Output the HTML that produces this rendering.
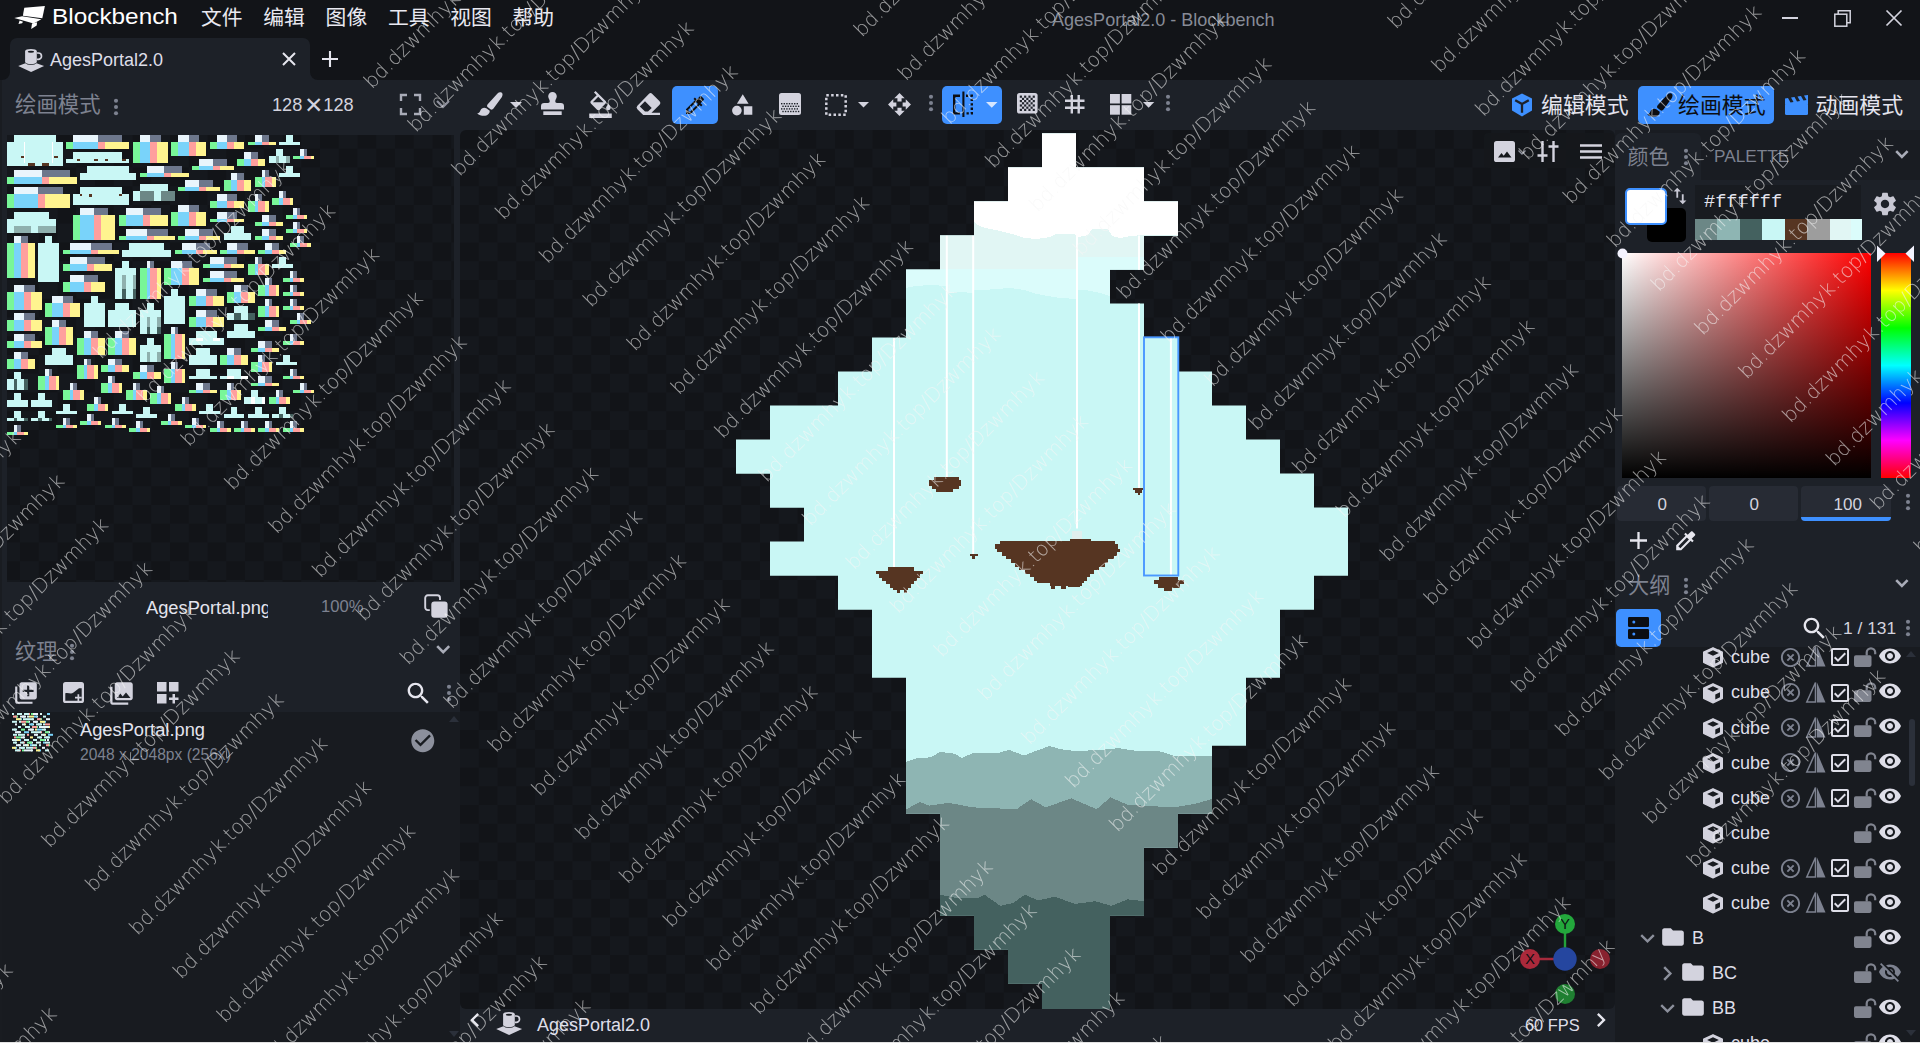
<!DOCTYPE html><html lang="zh"><head><meta charset="utf-8"><title>AgesPortal2.0 - Blockbench</title><style>
*{box-sizing:border-box;margin:0;padding:0}
html,body{width:1920px;height:1043px;overflow:hidden;background:#1d2128;}
body{position:relative;font-family:"Liberation Sans", "Noto Sans CJK SC", sans-serif;color:#d3d3de;font-size:18px;line-height:1}
.a{position:absolute}
.t{position:absolute;white-space:nowrap;line-height:1}
.cj{font-family:"Liberation Sans", "Noto Sans CJK SC", sans-serif}
svg{position:absolute;overflow:visible}
.wm{position:absolute;left:0;top:0;width:1920px;height:1043px;overflow:hidden;pointer-events:none}
.wm span{position:absolute;white-space:nowrap;font-family:"DejaVu Sans","Liberation Sans",sans-serif;font-weight:200;font-size:20px;line-height:24px;height:24px;color:rgba(222,222,222,.5);transform-origin:0 100%;transform:rotate(-30deg);letter-spacing:.42px}
</style></head><body><div class="a" style="left:0px;top:0px;width:1920px;height:38px;background:#121418;"></div>
<div class="a" style="left:0px;top:38px;width:1920px;height:42px;background:#121418;"></div>
<div class="a" style="left:10px;top:38px;width:300px;height:42px;background:#1d2128;border-radius:7px 7px 0 0"></div>
<svg style="left:2px;top:72px" width="8" height="8"><path d="M8 0V8H0A8 8 0 0 0 8 0Z" fill="#1d2128"/></svg>
<svg style="left:310px;top:72px" width="8" height="8"><path d="M0 0V8H8A8 8 0 0 1 0 0Z" fill="#1d2128"/></svg>
<div class="a" style="left:0px;top:80px;width:1920px;height:50px;background:#1d2128;"></div>
<div class="a" style="left:0px;top:80px;width:2px;height:963px;background:#191c21;"></div>
<div class="a" id="vp" style="left:460px;top:130px;width:1155px;height:879px;border-radius:6px;overflow:hidden;background-color:#15181d;background-image:conic-gradient(#121418 25%,#15181d 0 50%,#121418 0 75%,#15181d 0);background-size:37.5px 37.5px;background-position:18.75px 0;">
<svg style="left:0;top:0" width="1155" height="879" viewBox="0 0 1155 879"><defs><clipPath id="mc"><rect x="582.0" y="3.5" width="34.0" height="34.3"/><rect x="548.0" y="37.5" width="136.0" height="34.3"/><rect x="514.0" y="71.5" width="204.0" height="34.3"/><rect x="480.0" y="105.5" width="204.0" height="34.3"/><rect x="446.0" y="139.5" width="204.0" height="34.3"/><rect x="446.0" y="173.5" width="238.0" height="34.3"/><rect x="412.0" y="207.5" width="306.0" height="34.3"/><rect x="378.0" y="241.5" width="374.0" height="34.3"/><rect x="310.0" y="275.5" width="476.0" height="34.3"/><rect x="276.0" y="309.5" width="544.0" height="34.3"/><rect x="310.0" y="343.5" width="544.0" height="34.3"/><rect x="344.0" y="377.5" width="544.0" height="34.3"/><rect x="310.0" y="411.5" width="578.0" height="34.3"/><rect x="378.0" y="445.5" width="476.0" height="34.3"/><rect x="412.0" y="479.5" width="408.0" height="34.3"/><rect x="412.0" y="513.5" width="408.0" height="34.3"/><rect x="446.0" y="547.5" width="340.0" height="34.3"/><rect x="446.0" y="581.5" width="340.0" height="34.3"/><rect x="446.0" y="615.5" width="306.0" height="34.3"/><rect x="446.0" y="649.5" width="306.0" height="34.3"/><rect x="480.0" y="683.5" width="238.0" height="34.3"/><rect x="480.0" y="717.5" width="204.0" height="34.3"/><rect x="480.0" y="751.5" width="204.0" height="34.3"/><rect x="514.0" y="785.5" width="136.0" height="34.3"/><rect x="548.0" y="819.5" width="102.0" height="34.3"/><rect x="582.0" y="853.5" width="68.0" height="34.3"/></clipPath></defs><g clip-path="url(#mc)" shape-rendering="crispEdges"><rect x="0" y="0" width="1155" height="879" fill="#c9f7f5"/><polygon points="440.0,0.0 740.0,0.0 740.0,166.0 650.0,166.0 640.0,163.0 625.0,160.0 617.0,160.0 617.0,169.0 600.0,168.0 588.0,166.0 577.0,164.0 564.0,160.0 550.0,158.0 535.0,159.0 525.0,160.0 513.0,160.0 513.0,163.0 500.0,162.0 487.0,163.0 487.0,156.0 470.0,155.0 455.0,156.0 446.0,158.0 440.0,158.0" fill="#dbfcfb"/><polygon points="440.0,0.0 740.0,0.0 740.0,127.0 617.0,127.0 617.0,139.0 440.0,139.0" fill="#e1f6f4"/><polygon points="440.0,0.0 740.0,0.0 740.0,105.0 684.0,105.0 670.0,106.0 660.0,108.0 652.0,106.0 648.0,99.0 632.0,99.0 628.0,105.0 618.0,107.0 614.0,104.0 596.0,104.0 590.0,107.0 577.0,109.0 565.0,108.0 552.0,104.0 540.0,101.0 525.0,98.0 518.0,95.0 514.0,92.0 514.0,105.0 440.0,105.0" fill="#ffffff"/><polygon points="446.4,631.9 456.4,628.2 471.0,627.3 480.0,621.9 494.6,623.7 502.0,628.2 513.0,622.8 525.6,622.8 538.4,622.8 549.3,620.0 563.9,625.5 578.4,620.0 589.4,616.0 600.3,619.1 614.9,621.0 640.4,620.0 658.6,618.2 676.8,621.0 698.7,621.0 713.2,625.5 751.5,626.4 790.0,626.0 790.0,890.0 420.0,890.0 420.0,632.0" fill="#8eb5b3"/><polygon points="446.4,679.2 460.0,672.0 469.0,675.6 489.0,672.9 512.9,677.4 556.6,679.2 571.1,669.2 585.7,677.4 611.2,668.3 636.7,679.2 650.4,667.4 667.7,674.7 713.2,677.4 735.0,673.8 751.5,669.2 790.0,669.0 790.0,890.0 420.0,890.0 420.0,679.0" fill="#6c8786"/><polygon points="470.0,764.0 480.0,764.8 494.6,767.6 516.5,768.5 524.7,764.8 540.2,775.8 552.9,773.0 564.8,764.8 578.4,770.3 594.8,766.7 614.9,774.0 634.9,771.2 651.3,775.8 667.7,769.4 684.0,771.2 740.0,771.0 740.0,890.0 470.0,890.0" fill="#44615f"/></g><g clip-path="url(#mc)"><rect x="433.0" y="208.0" width="2" height="230.0" fill="#ffffff"/><rect x="485.8" y="105.5" width="2" height="241.5" fill="#ffffff"/><rect x="512.2" y="105.5" width="2" height="318.5" fill="#ffffff"/><rect x="616.0" y="105.5" width="2" height="293.0" fill="#ffffff"/><rect x="678.0" y="105.5" width="2" height="253.0" fill="#ffffff"/><rect x="709.9" y="208.0" width="2" height="237.5" fill="#ffffff"/></g><rect x="473.5" y="346.8" width="25.5" height="3.7" fill="#563522" shape-rendering="crispEdges"/><rect x="469.0" y="350.3" width="32.0" height="5.6" fill="#563522" shape-rendering="crispEdges"/><rect x="472.0" y="355.7" width="27.0" height="3.0" fill="#563522" shape-rendering="crispEdges"/><rect x="475.5" y="358.5" width="17.5" height="3.6" fill="#563522" shape-rendering="crispEdges"/><rect x="509.8" y="423.9" width="8.0" height="2.3" fill="#563522" shape-rendering="crispEdges"/><rect x="512.4" y="426.0" width="2.8" height="3.0" fill="#563522" shape-rendering="crispEdges"/><rect x="672.7" y="358.0" width="10.6" height="2.3" fill="#563522" shape-rendering="crispEdges"/><rect x="675.4" y="360.1" width="6.2" height="2.9" fill="#563522" shape-rendering="crispEdges"/><rect x="677.7" y="362.8" width="2.5" height="2.3" fill="#563522" shape-rendering="crispEdges"/><rect x="609.8" y="408.8" width="21.3" height="2.5" fill="#563522" shape-rendering="crispEdges"/><rect x="539.9" y="411.1" width="115.1" height="3.3" fill="#563522" shape-rendering="crispEdges"/><rect x="534.9" y="414.2" width="122.6" height="4.6" fill="#563522" shape-rendering="crispEdges"/><rect x="537.0" y="418.6" width="123.0" height="3.8" fill="#563522" shape-rendering="crispEdges"/><rect x="541.5" y="422.2" width="115.5" height="3.7" fill="#563522" shape-rendering="crispEdges"/><rect x="546.0" y="425.7" width="107.5" height="3.7" fill="#563522" shape-rendering="crispEdges"/><rect x="550.5" y="429.2" width="97.5" height="3.8" fill="#563522" shape-rendering="crispEdges"/><rect x="555.0" y="432.8" width="89.5" height="3.7" fill="#563522" shape-rendering="crispEdges"/><rect x="559.4" y="436.3" width="79.6" height="3.7" fill="#563522" shape-rendering="crispEdges"/><rect x="565.0" y="439.8" width="69.0" height="3.7" fill="#563522" shape-rendering="crispEdges"/><rect x="570.0" y="443.3" width="60.2" height="3.8" fill="#563522" shape-rendering="crispEdges"/><rect x="574.0" y="446.9" width="53.0" height="3.7" fill="#563522" shape-rendering="crispEdges"/><rect x="577.0" y="450.4" width="47.0" height="2.8" fill="#563522" shape-rendering="crispEdges"/><rect x="590.4" y="453.0" width="31.8" height="3.0" fill="#563522" shape-rendering="crispEdges"/><rect x="591.3" y="455.8" width="3.7" height="3.0" fill="#563522" shape-rendering="crispEdges"/><rect x="601.0" y="455.8" width="4.5" height="3.0" fill="#563522" shape-rendering="crispEdges"/><rect x="608.0" y="455.8" width="12.0" height="1.6" fill="#563522" shape-rendering="crispEdges"/><rect x="612" y="401" width="10" height="8" fill="#e6ecec" opacity=".8"/><rect x="428.3" y="437.1" width="25.7" height="3.8" fill="#563522" shape-rendering="crispEdges"/><rect x="415.9" y="440.7" width="47.0" height="3.7" fill="#563522" shape-rendering="crispEdges"/><rect x="419.0" y="444.2" width="40.5" height="3.5" fill="#563522" shape-rendering="crispEdges"/><rect x="422.0" y="447.5" width="35.0" height="3.1" fill="#563522" shape-rendering="crispEdges"/><rect x="425.5" y="450.4" width="28.5" height="3.8" fill="#563522" shape-rendering="crispEdges"/><rect x="429.5" y="454.0" width="21.0" height="3.7" fill="#563522" shape-rendering="crispEdges"/><rect x="433.0" y="457.5" width="14.5" height="2.9" fill="#563522" shape-rendering="crispEdges"/><rect x="437.0" y="460.2" width="3.0" height="2.5" fill="#563522" shape-rendering="crispEdges"/><rect x="444.0" y="460.2" width="2.5" height="2.5" fill="#563522" shape-rendering="crispEdges"/><rect x="699.3" y="446.5" width="18.6" height="3.2" fill="#563522" shape-rendering="crispEdges"/><rect x="694.0" y="449.5" width="30.0" height="4.7" fill="#563522" shape-rendering="crispEdges"/><rect x="697.5" y="454.0" width="22.5" height="3.5" fill="#563522" shape-rendering="crispEdges"/><rect x="703.7" y="457.3" width="8.0" height="3.6" fill="#563522" shape-rendering="crispEdges"/><rect x="684" y="207.3" width="34.3" height="238.2" fill="none" stroke="#4a98ff" stroke-width="1.9"/></svg>
</div>
<div class="a" style="left:460px;top:1009px;width:1155px;height:33px;background:#1d2128;"></div>
<div class="a" style="left:0px;top:1041.5px;width:1920px;height:2px;background:#e4e4e4;"></div>
<div class="a" style="left:7px;top:135px;width:447px;height:447px;overflow:hidden;background-color:#15181d;background-image:conic-gradient(#121418 25%,#15181d 0 50%,#121418 0 75%,#15181d 0);background-size:37.5px 37.5px;background-position:13px 13.7px;"><svg style="left:0;top:0" width="447" height="447" viewBox="0 0 128 128" shape-rendering="crispEdges"><rect x="2" y="0" width="12" height="2" fill="#c9f7f5"/><rect x="0" y="2" width="16" height="7" fill="#c9f7f5"/><rect x="19" y="0" width="7" height="2" fill="#e9f5fc"/><rect x="26" y="0" width="7" height="2" fill="#6d778c"/><rect x="17" y="2" width="2" height="2" fill="#78f698"/><rect x="19" y="2" width="7" height="2" fill="#79d3fa"/><rect x="26" y="2" width="2" height="2" fill="#ff9f9d"/><rect x="28" y="2" width="7" height="2" fill="#fff48f"/><rect x="38" y="0" width="3" height="2" fill="#e9f5fc"/><rect x="41" y="0" width="3" height="2" fill="#6d778c"/><rect x="36" y="2" width="2" height="6" fill="#78f698"/><rect x="38" y="2" width="3" height="6" fill="#79d3fa"/><rect x="41" y="2" width="2" height="6" fill="#ff9f9d"/><rect x="43" y="2" width="3" height="6" fill="#fff48f"/><rect x="19" y="5" width="14" height="2" fill="#c9f7f5"/><rect x="17" y="7" width="18" height="1" fill="#c9f7f5"/><rect x="2" y="10" width="8" height="2" fill="#e9f5fc"/><rect x="10" y="10" width="8" height="2" fill="#6d778c"/><rect x="0" y="12" width="2" height="2" fill="#78f698"/><rect x="2" y="12" width="8" height="2" fill="#79d3fa"/><rect x="10" y="12" width="2" height="2" fill="#ff9f9d"/><rect x="12" y="12" width="8" height="2" fill="#fff48f"/><rect x="23" y="9" width="12" height="2" fill="#c9f7f5"/><rect x="21" y="11" width="16" height="2" fill="#c9f7f5"/><rect x="40" y="9" width="5" height="2" fill="#e9f5fc"/><rect x="45" y="9" width="5" height="2" fill="#6d778c"/><rect x="38" y="11" width="2" height="1" fill="#78f698"/><rect x="40" y="11" width="5" height="1" fill="#79d3fa"/><rect x="45" y="11" width="2" height="1" fill="#ff9f9d"/><rect x="47" y="11" width="5" height="1" fill="#fff48f"/><rect x="2" y="15" width="7" height="2" fill="#e9f5fc"/><rect x="9" y="15" width="7" height="2" fill="#6d778c"/><rect x="0" y="17" width="2" height="4" fill="#78f698"/><rect x="2" y="17" width="7" height="4" fill="#79d3fa"/><rect x="9" y="17" width="2" height="4" fill="#ff9f9d"/><rect x="11" y="17" width="7" height="4" fill="#fff48f"/><rect x="21" y="15" width="12" height="2" fill="#c9f7f5"/><rect x="19" y="17" width="16" height="3" fill="#c9f7f5"/><rect x="38" y="14" width="8" height="2" fill="#c9f7f5"/><rect x="36" y="16" width="12" height="3" fill="#c9f7f5"/><rect x="38" y="16" width="4" height="3" fill="#6c8786"/><rect x="44" y="16" width="4" height="3" fill="#6c8786"/><rect x="2" y="22" width="10" height="2" fill="#c9f7f5"/><rect x="0" y="24" width="14" height="4" fill="#c9f7f5"/><rect x="2" y="26" width="5" height="2" fill="#8fb0ae"/><rect x="9" y="26" width="5" height="2" fill="#8fb0ae"/><rect x="21" y="21" width="4" height="2" fill="#e9f5fc"/><rect x="25" y="21" width="4" height="2" fill="#6d778c"/><rect x="19" y="23" width="2" height="7" fill="#78f698"/><rect x="21" y="23" width="4" height="7" fill="#79d3fa"/><rect x="25" y="23" width="2" height="7" fill="#ff9f9d"/><rect x="27" y="23" width="4" height="7" fill="#fff48f"/><rect x="34" y="21" width="5" height="2" fill="#e9f5fc"/><rect x="39" y="21" width="5" height="2" fill="#6d778c"/><rect x="32" y="23" width="2" height="3" fill="#78f698"/><rect x="34" y="23" width="5" height="3" fill="#79d3fa"/><rect x="39" y="23" width="2" height="3" fill="#ff9f9d"/><rect x="41" y="23" width="5" height="3" fill="#fff48f"/><rect x="34" y="27" width="6" height="2" fill="#e9f5fc"/><rect x="40" y="27" width="6" height="2" fill="#6d778c"/><rect x="32" y="29" width="2" height="1" fill="#78f698"/><rect x="34" y="29" width="6" height="1" fill="#79d3fa"/><rect x="40" y="29" width="2" height="1" fill="#ff9f9d"/><rect x="42" y="29" width="6" height="1" fill="#fff48f"/><rect x="4" y="6" width="1" height="0.5" fill="#563522"/><rect x="13.5" y="6" width="1" height="0.5" fill="#563522"/><rect x="6" y="8" width="2" height="1" fill="#563522"/><rect x="10" y="8" width="2" height="1" fill="#563522"/><rect x="20" y="7" width="1" height="0.5" fill="#563522"/><rect x="25" y="7" width="1" height="0.5" fill="#563522"/><rect x="28" y="7" width="1" height="0.5" fill="#563522"/><rect x="33" y="7" width="1" height="0.5" fill="#563522"/><rect x="21" y="17" width="0.5" height="0.5" fill="#563522"/><rect x="23.5" y="17" width="0.7" height="0.7" fill="#563522"/><rect x="32" y="17" width="0.8" height="0.6" fill="#563522"/><rect x="11" y="41" width="1" height="1" fill="#563522"/><rect x="14.3" y="41" width="0.7" height="1" fill="#563522"/><rect x="5" y="2" width="0.25" height="6" fill="#ffffff"/><rect x="13" y="2" width="0.25" height="6" fill="#ffffff"/><rect x="11" y="31" width="0.3" height="10" fill="#ffffff"/><rect x="49" y="0" width="3" height="2" fill="#e9f5fc"/><rect x="52" y="0" width="3" height="2" fill="#6d778c"/><rect x="47" y="2" width="2" height="4" fill="#78f698"/><rect x="49" y="2" width="3" height="4" fill="#79d3fa"/><rect x="52" y="2" width="2" height="4" fill="#ff9f9d"/><rect x="54" y="2" width="3" height="4" fill="#fff48f"/><rect x="60" y="0" width="3" height="2" fill="#e9f5fc"/><rect x="63" y="0" width="3" height="2" fill="#6d778c"/><rect x="58" y="2" width="2" height="2" fill="#78f698"/><rect x="60" y="2" width="3" height="2" fill="#79d3fa"/><rect x="63" y="2" width="2" height="2" fill="#ff9f9d"/><rect x="65" y="2" width="3" height="2" fill="#fff48f"/><rect x="71" y="0" width="2" height="2" fill="#e9f5fc"/><rect x="73" y="0" width="2" height="2" fill="#6d778c"/><rect x="69" y="2" width="2" height="1" fill="#78f698"/><rect x="71" y="2" width="2" height="1" fill="#79d3fa"/><rect x="73" y="2" width="2" height="1" fill="#ff9f9d"/><rect x="75" y="2" width="2" height="1" fill="#fff48f"/><rect x="80" y="0" width="2" height="2" fill="#c9f7f5"/><rect x="78" y="2" width="6" height="1" fill="#c9f7f5"/><rect x="77" y="4" width="2" height="2" fill="#c9f7f5"/><rect x="75" y="6" width="6" height="2" fill="#c9f7f5"/><rect x="77" y="6" width="1" height="2" fill="#8fb0ae"/><rect x="80" y="6" width="1" height="2" fill="#8fb0ae"/><rect x="84" y="4" width="1" height="2" fill="#e9f5fc"/><rect x="85" y="4" width="1" height="2" fill="#6d778c"/><rect x="82" y="6" width="2" height="1" fill="#78f698"/><rect x="84" y="6" width="1" height="1" fill="#79d3fa"/><rect x="85" y="6" width="2" height="1" fill="#ff9f9d"/><rect x="87" y="6" width="1" height="1" fill="#fff48f"/><rect x="68" y="5" width="2" height="2" fill="#e9f5fc"/><rect x="70" y="5" width="2" height="2" fill="#6d778c"/><rect x="66" y="7" width="2" height="2" fill="#78f698"/><rect x="68" y="7" width="2" height="2" fill="#79d3fa"/><rect x="70" y="7" width="2" height="2" fill="#ff9f9d"/><rect x="72" y="7" width="2" height="2" fill="#fff48f"/><rect x="55" y="7" width="4" height="2" fill="#e9f5fc"/><rect x="59" y="7" width="4" height="2" fill="#6d778c"/><rect x="53" y="9" width="2" height="1" fill="#78f698"/><rect x="55" y="9" width="4" height="1" fill="#79d3fa"/><rect x="59" y="9" width="2" height="1" fill="#ff9f9d"/><rect x="61" y="9" width="4" height="1" fill="#fff48f"/><rect x="80" y="9" width="2" height="2" fill="#c9f7f5"/><rect x="78" y="11" width="6" height="1" fill="#c9f7f5"/><rect x="73" y="10" width="1" height="2" fill="#e9f5fc"/><rect x="74" y="10" width="1" height="2" fill="#6d778c"/><rect x="71" y="12" width="2" height="3" fill="#78f698"/><rect x="73" y="12" width="1" height="3" fill="#79d3fa"/><rect x="74" y="12" width="2" height="3" fill="#ff9f9d"/><rect x="76" y="12" width="1" height="3" fill="#fff48f"/><rect x="64" y="11" width="2" height="2" fill="#e9f5fc"/><rect x="66" y="11" width="2" height="2" fill="#6d778c"/><rect x="62" y="13" width="2" height="3" fill="#78f698"/><rect x="64" y="13" width="2" height="3" fill="#79d3fa"/><rect x="66" y="13" width="2" height="3" fill="#ff9f9d"/><rect x="68" y="13" width="2" height="3" fill="#fff48f"/><rect x="51" y="13" width="4" height="2" fill="#e9f5fc"/><rect x="55" y="13" width="4" height="2" fill="#6d778c"/><rect x="49" y="15" width="2" height="1" fill="#78f698"/><rect x="51" y="15" width="4" height="1" fill="#79d3fa"/><rect x="55" y="15" width="2" height="1" fill="#ff9f9d"/><rect x="57" y="15" width="4" height="1" fill="#fff48f"/><rect x="60" y="17" width="3" height="2" fill="#e9f5fc"/><rect x="63" y="17" width="3" height="2" fill="#6d778c"/><rect x="58" y="19" width="2" height="2" fill="#78f698"/><rect x="60" y="19" width="3" height="2" fill="#79d3fa"/><rect x="63" y="19" width="2" height="2" fill="#ff9f9d"/><rect x="65" y="19" width="3" height="2" fill="#fff48f"/><rect x="71" y="17" width="1" height="2" fill="#e9f5fc"/><rect x="72" y="17" width="1" height="2" fill="#6d778c"/><rect x="69" y="19" width="2" height="3" fill="#78f698"/><rect x="71" y="19" width="1" height="3" fill="#79d3fa"/><rect x="72" y="19" width="2" height="3" fill="#ff9f9d"/><rect x="74" y="19" width="1" height="3" fill="#fff48f"/><rect x="78" y="16" width="1" height="2" fill="#e9f5fc"/><rect x="79" y="16" width="1" height="2" fill="#6d778c"/><rect x="76" y="18" width="2" height="2" fill="#78f698"/><rect x="78" y="18" width="1" height="2" fill="#79d3fa"/><rect x="79" y="18" width="2" height="2" fill="#ff9f9d"/><rect x="81" y="18" width="1" height="2" fill="#fff48f"/><rect x="49" y="20" width="3" height="2" fill="#e9f5fc"/><rect x="52" y="20" width="3" height="2" fill="#6d778c"/><rect x="47" y="22" width="2" height="4" fill="#78f698"/><rect x="49" y="22" width="3" height="4" fill="#79d3fa"/><rect x="52" y="22" width="2" height="4" fill="#ff9f9d"/><rect x="54" y="22" width="3" height="4" fill="#fff48f"/><rect x="60" y="22" width="3" height="2" fill="#e9f5fc"/><rect x="63" y="22" width="3" height="2" fill="#6d778c"/><rect x="58" y="24" width="2" height="1" fill="#78f698"/><rect x="60" y="24" width="3" height="1" fill="#79d3fa"/><rect x="63" y="24" width="2" height="1" fill="#ff9f9d"/><rect x="65" y="24" width="3" height="1" fill="#fff48f"/><rect x="73" y="23" width="2" height="2" fill="#e9f5fc"/><rect x="75" y="23" width="2" height="2" fill="#6d778c"/><rect x="71" y="25" width="2" height="1" fill="#78f698"/><rect x="73" y="25" width="2" height="1" fill="#79d3fa"/><rect x="75" y="25" width="2" height="1" fill="#ff9f9d"/><rect x="77" y="25" width="2" height="1" fill="#fff48f"/><rect x="82" y="21" width="1" height="2" fill="#e9f5fc"/><rect x="83" y="21" width="1" height="2" fill="#6d778c"/><rect x="80" y="23" width="2" height="1" fill="#78f698"/><rect x="82" y="23" width="1" height="1" fill="#79d3fa"/><rect x="83" y="23" width="2" height="1" fill="#ff9f9d"/><rect x="85" y="23" width="1" height="1" fill="#fff48f"/><rect x="82" y="25" width="1" height="2" fill="#e9f5fc"/><rect x="83" y="25" width="1" height="2" fill="#6d778c"/><rect x="80" y="27" width="2" height="1" fill="#78f698"/><rect x="82" y="27" width="1" height="1" fill="#79d3fa"/><rect x="83" y="27" width="2" height="1" fill="#ff9f9d"/><rect x="85" y="27" width="1" height="1" fill="#fff48f"/><rect x="51" y="27" width="4" height="2" fill="#e9f5fc"/><rect x="55" y="27" width="4" height="2" fill="#6d778c"/><rect x="49" y="29" width="2" height="1" fill="#78f698"/><rect x="51" y="29" width="4" height="1" fill="#79d3fa"/><rect x="55" y="29" width="2" height="1" fill="#ff9f9d"/><rect x="57" y="29" width="4" height="1" fill="#fff48f"/><rect x="64" y="26" width="4" height="2" fill="#c9f7f5"/><rect x="62" y="28" width="8" height="2" fill="#c9f7f5"/><rect x="73" y="27" width="2" height="2" fill="#e9f5fc"/><rect x="75" y="27" width="2" height="2" fill="#6d778c"/><rect x="71" y="29" width="2" height="1" fill="#78f698"/><rect x="73" y="29" width="2" height="1" fill="#79d3fa"/><rect x="75" y="29" width="2" height="1" fill="#ff9f9d"/><rect x="77" y="29" width="2" height="1" fill="#fff48f"/><rect x="83" y="29" width="1" height="2" fill="#e9f5fc"/><rect x="84" y="29" width="1" height="2" fill="#6d778c"/><rect x="81" y="31" width="2" height="1" fill="#78f698"/><rect x="83" y="31" width="1" height="1" fill="#79d3fa"/><rect x="84" y="31" width="2" height="1" fill="#ff9f9d"/><rect x="86" y="31" width="1" height="1" fill="#fff48f"/><rect x="2" y="29" width="2" height="2" fill="#e9f5fc"/><rect x="4" y="29" width="2" height="2" fill="#6d778c"/><rect x="0" y="31" width="2" height="10" fill="#78f698"/><rect x="2" y="31" width="2" height="10" fill="#79d3fa"/><rect x="4" y="31" width="2" height="10" fill="#ff9f9d"/><rect x="6" y="31" width="2" height="10" fill="#fff48f"/><rect x="11" y="29" width="2" height="2" fill="#c9f7f5"/><rect x="9" y="31" width="6" height="11" fill="#c9f7f5"/><rect x="18" y="31" width="6" height="2" fill="#e9f5fc"/><rect x="24" y="31" width="6" height="2" fill="#6d778c"/><rect x="16" y="33" width="2" height="1" fill="#78f698"/><rect x="18" y="33" width="6" height="1" fill="#79d3fa"/><rect x="24" y="33" width="2" height="1" fill="#ff9f9d"/><rect x="26" y="33" width="6" height="1" fill="#fff48f"/><rect x="35" y="31" width="10" height="2" fill="#c9f7f5"/><rect x="33" y="33" width="14" height="2" fill="#c9f7f5"/><rect x="18" y="35" width="5" height="2" fill="#e9f5fc"/><rect x="23" y="35" width="5" height="2" fill="#6d778c"/><rect x="16" y="37" width="2" height="2" fill="#78f698"/><rect x="18" y="37" width="5" height="2" fill="#79d3fa"/><rect x="23" y="37" width="2" height="2" fill="#ff9f9d"/><rect x="25" y="37" width="5" height="2" fill="#fff48f"/><rect x="18" y="40" width="4" height="2" fill="#e9f5fc"/><rect x="22" y="40" width="4" height="2" fill="#6d778c"/><rect x="16" y="42" width="2" height="3" fill="#78f698"/><rect x="18" y="42" width="4" height="3" fill="#79d3fa"/><rect x="22" y="42" width="2" height="3" fill="#ff9f9d"/><rect x="24" y="42" width="4" height="3" fill="#fff48f"/><rect x="33" y="36" width="2" height="2" fill="#c9f7f5"/><rect x="31" y="38" width="6" height="9" fill="#c9f7f5"/><rect x="33" y="40" width="1" height="7" fill="#8fb0ae"/><rect x="36" y="40" width="1" height="7" fill="#8fb0ae"/><rect x="33" y="44" width="1" height="3" fill="#44615f"/><rect x="36" y="44" width="1" height="3" fill="#44615f"/><rect x="40" y="36" width="1" height="2" fill="#e9f5fc"/><rect x="41" y="36" width="1" height="2" fill="#6d778c"/><rect x="38" y="38" width="2" height="9" fill="#78f698"/><rect x="40" y="38" width="1" height="9" fill="#79d3fa"/><rect x="41" y="38" width="2" height="9" fill="#ff9f9d"/><rect x="43" y="38" width="1" height="9" fill="#fff48f"/><rect x="2" y="43" width="3" height="2" fill="#e9f5fc"/><rect x="5" y="43" width="3" height="2" fill="#6d778c"/><rect x="0" y="45" width="2" height="5" fill="#78f698"/><rect x="2" y="45" width="3" height="5" fill="#79d3fa"/><rect x="5" y="45" width="2" height="5" fill="#ff9f9d"/><rect x="7" y="45" width="3" height="5" fill="#fff48f"/><rect x="13" y="46" width="3" height="2" fill="#e9f5fc"/><rect x="16" y="46" width="3" height="2" fill="#6d778c"/><rect x="11" y="48" width="2" height="4" fill="#78f698"/><rect x="13" y="48" width="3" height="4" fill="#79d3fa"/><rect x="16" y="48" width="2" height="4" fill="#ff9f9d"/><rect x="18" y="48" width="3" height="4" fill="#fff48f"/><rect x="24" y="46" width="2" height="2" fill="#c9f7f5"/><rect x="22" y="48" width="6" height="7" fill="#c9f7f5"/><rect x="31" y="48" width="4" height="2" fill="#c9f7f5"/><rect x="29" y="50" width="8" height="5" fill="#c9f7f5"/><rect x="40" y="48" width="2" height="2" fill="#c9f7f5"/><rect x="38" y="50" width="6" height="7" fill="#c9f7f5"/><rect x="40" y="52" width="1" height="5" fill="#8fb0ae"/><rect x="43" y="52" width="1" height="5" fill="#8fb0ae"/><rect x="40" y="55" width="1" height="2" fill="#44615f"/><rect x="43" y="55" width="1" height="2" fill="#44615f"/><rect x="2" y="51" width="3" height="2" fill="#e9f5fc"/><rect x="5" y="51" width="3" height="2" fill="#6d778c"/><rect x="0" y="53" width="2" height="3" fill="#78f698"/><rect x="2" y="53" width="3" height="3" fill="#79d3fa"/><rect x="5" y="53" width="2" height="3" fill="#ff9f9d"/><rect x="7" y="53" width="3" height="3" fill="#fff48f"/><rect x="13" y="53" width="2" height="2" fill="#e9f5fc"/><rect x="15" y="53" width="2" height="2" fill="#6d778c"/><rect x="11" y="55" width="2" height="5" fill="#78f698"/><rect x="13" y="55" width="2" height="5" fill="#79d3fa"/><rect x="15" y="55" width="2" height="5" fill="#ff9f9d"/><rect x="17" y="55" width="2" height="5" fill="#fff48f"/><rect x="50" y="31" width="4" height="2" fill="#e9f5fc"/><rect x="54" y="31" width="4" height="2" fill="#6d778c"/><rect x="48" y="33" width="2" height="1" fill="#78f698"/><rect x="50" y="33" width="4" height="1" fill="#79d3fa"/><rect x="54" y="33" width="2" height="1" fill="#ff9f9d"/><rect x="56" y="33" width="4" height="1" fill="#fff48f"/><rect x="63" y="31" width="3" height="2" fill="#e9f5fc"/><rect x="66" y="31" width="3" height="2" fill="#6d778c"/><rect x="61" y="33" width="2" height="1" fill="#78f698"/><rect x="63" y="33" width="3" height="1" fill="#79d3fa"/><rect x="66" y="33" width="2" height="1" fill="#ff9f9d"/><rect x="68" y="33" width="3" height="1" fill="#fff48f"/><rect x="74" y="31" width="2" height="2" fill="#e9f5fc"/><rect x="76" y="31" width="2" height="2" fill="#6d778c"/><rect x="72" y="33" width="2" height="1" fill="#78f698"/><rect x="74" y="33" width="2" height="1" fill="#79d3fa"/><rect x="76" y="33" width="2" height="1" fill="#ff9f9d"/><rect x="78" y="33" width="2" height="1" fill="#fff48f"/><rect x="58" y="35" width="4" height="2" fill="#e9f5fc"/><rect x="62" y="35" width="4" height="2" fill="#6d778c"/><rect x="56" y="37" width="2" height="1" fill="#78f698"/><rect x="58" y="37" width="4" height="1" fill="#79d3fa"/><rect x="62" y="37" width="2" height="1" fill="#ff9f9d"/><rect x="64" y="37" width="4" height="1" fill="#fff48f"/><rect x="58" y="39" width="4" height="2" fill="#e9f5fc"/><rect x="62" y="39" width="4" height="2" fill="#6d778c"/><rect x="56" y="41" width="2" height="1" fill="#78f698"/><rect x="58" y="41" width="4" height="1" fill="#79d3fa"/><rect x="62" y="41" width="2" height="1" fill="#ff9f9d"/><rect x="64" y="41" width="4" height="1" fill="#fff48f"/><rect x="47" y="36" width="3" height="2" fill="#e9f5fc"/><rect x="50" y="36" width="3" height="2" fill="#6d778c"/><rect x="45" y="38" width="2" height="5" fill="#78f698"/><rect x="47" y="38" width="3" height="5" fill="#79d3fa"/><rect x="50" y="38" width="2" height="5" fill="#ff9f9d"/><rect x="52" y="38" width="3" height="5" fill="#fff48f"/><rect x="71" y="35" width="1" height="2" fill="#e9f5fc"/><rect x="72" y="35" width="1" height="2" fill="#6d778c"/><rect x="69" y="37" width="2" height="3" fill="#78f698"/><rect x="71" y="37" width="1" height="3" fill="#79d3fa"/><rect x="72" y="37" width="2" height="3" fill="#ff9f9d"/><rect x="74" y="37" width="1" height="3" fill="#fff48f"/><rect x="78" y="35" width="2" height="2" fill="#c9f7f5"/><rect x="76" y="37" width="6" height="1" fill="#c9f7f5"/><rect x="81" y="39" width="1" height="2" fill="#e9f5fc"/><rect x="82" y="39" width="1" height="2" fill="#6d778c"/><rect x="79" y="41" width="2" height="1" fill="#78f698"/><rect x="81" y="41" width="1" height="1" fill="#79d3fa"/><rect x="82" y="41" width="2" height="1" fill="#ff9f9d"/><rect x="84" y="41" width="1" height="1" fill="#fff48f"/><rect x="74" y="41" width="1" height="2" fill="#e9f5fc"/><rect x="75" y="41" width="1" height="2" fill="#6d778c"/><rect x="72" y="43" width="2" height="3" fill="#78f698"/><rect x="74" y="43" width="1" height="3" fill="#79d3fa"/><rect x="75" y="43" width="2" height="3" fill="#ff9f9d"/><rect x="77" y="43" width="1" height="3" fill="#fff48f"/><rect x="81" y="43" width="1" height="2" fill="#e9f5fc"/><rect x="82" y="43" width="1" height="2" fill="#6d778c"/><rect x="79" y="45" width="2" height="1" fill="#78f698"/><rect x="81" y="45" width="1" height="1" fill="#79d3fa"/><rect x="82" y="45" width="2" height="1" fill="#ff9f9d"/><rect x="84" y="45" width="1" height="1" fill="#fff48f"/><rect x="65" y="43" width="2" height="2" fill="#e9f5fc"/><rect x="67" y="43" width="2" height="2" fill="#6d778c"/><rect x="63" y="45" width="2" height="3" fill="#78f698"/><rect x="65" y="45" width="2" height="3" fill="#79d3fa"/><rect x="67" y="45" width="2" height="3" fill="#ff9f9d"/><rect x="69" y="45" width="2" height="3" fill="#fff48f"/><rect x="54" y="44" width="3" height="2" fill="#e9f5fc"/><rect x="57" y="44" width="3" height="2" fill="#6d778c"/><rect x="52" y="46" width="2" height="3" fill="#78f698"/><rect x="54" y="46" width="3" height="3" fill="#79d3fa"/><rect x="57" y="46" width="2" height="3" fill="#ff9f9d"/><rect x="59" y="46" width="3" height="3" fill="#fff48f"/><rect x="47" y="44" width="2" height="2" fill="#c9f7f5"/><rect x="45" y="46" width="6" height="8" fill="#c9f7f5"/><rect x="74" y="47" width="1" height="2" fill="#e9f5fc"/><rect x="75" y="47" width="1" height="2" fill="#6d778c"/><rect x="72" y="49" width="2" height="3" fill="#78f698"/><rect x="74" y="49" width="1" height="3" fill="#79d3fa"/><rect x="75" y="49" width="2" height="3" fill="#ff9f9d"/><rect x="77" y="49" width="1" height="3" fill="#fff48f"/><rect x="81" y="47" width="1" height="2" fill="#e9f5fc"/><rect x="82" y="47" width="1" height="2" fill="#6d778c"/><rect x="79" y="49" width="2" height="1" fill="#78f698"/><rect x="81" y="49" width="1" height="1" fill="#79d3fa"/><rect x="82" y="49" width="2" height="1" fill="#ff9f9d"/><rect x="84" y="49" width="1" height="1" fill="#fff48f"/><rect x="65" y="49" width="4" height="2" fill="#c9f7f5"/><rect x="63" y="51" width="8" height="2" fill="#c9f7f5"/><rect x="65" y="51" width="2" height="2" fill="#44615f"/><rect x="69" y="51" width="2" height="2" fill="#44615f"/><rect x="54" y="50" width="3" height="2" fill="#e9f5fc"/><rect x="57" y="50" width="3" height="2" fill="#6d778c"/><rect x="52" y="52" width="2" height="3" fill="#78f698"/><rect x="54" y="52" width="3" height="3" fill="#79d3fa"/><rect x="57" y="52" width="2" height="3" fill="#ff9f9d"/><rect x="59" y="52" width="3" height="3" fill="#fff48f"/><rect x="83" y="51" width="1" height="2" fill="#e9f5fc"/><rect x="84" y="51" width="1" height="2" fill="#6d778c"/><rect x="81" y="53" width="2" height="1" fill="#78f698"/><rect x="83" y="53" width="1" height="1" fill="#79d3fa"/><rect x="84" y="53" width="2" height="1" fill="#ff9f9d"/><rect x="86" y="53" width="1" height="1" fill="#fff48f"/><rect x="74" y="53" width="2" height="2" fill="#e9f5fc"/><rect x="76" y="53" width="2" height="2" fill="#6d778c"/><rect x="72" y="55" width="2" height="1" fill="#78f698"/><rect x="74" y="55" width="2" height="1" fill="#79d3fa"/><rect x="76" y="55" width="2" height="1" fill="#ff9f9d"/><rect x="78" y="55" width="2" height="1" fill="#fff48f"/><rect x="65" y="54" width="4" height="2" fill="#c9f7f5"/><rect x="63" y="56" width="8" height="2" fill="#c9f7f5"/><rect x="47" y="55" width="1" height="2" fill="#e9f5fc"/><rect x="48" y="55" width="1" height="2" fill="#6d778c"/><rect x="45" y="57" width="2" height="7" fill="#78f698"/><rect x="47" y="57" width="1" height="7" fill="#79d3fa"/><rect x="48" y="57" width="2" height="7" fill="#ff9f9d"/><rect x="50" y="57" width="1" height="7" fill="#fff48f"/><rect x="54" y="56" width="6" height="2" fill="#c9f7f5"/><rect x="52" y="58" width="10" height="2" fill="#c9f7f5"/><rect x="54" y="58" width="2" height="1" fill="#fff"/><rect x="59" y="58" width="2" height="1" fill="#fff"/><rect x="2" y="57" width="3" height="2" fill="#e9f5fc"/><rect x="5" y="57" width="3" height="2" fill="#6d778c"/><rect x="0" y="59" width="2" height="2" fill="#78f698"/><rect x="2" y="59" width="3" height="2" fill="#79d3fa"/><rect x="5" y="59" width="2" height="2" fill="#ff9f9d"/><rect x="7" y="59" width="3" height="2" fill="#fff48f"/><rect x="22" y="56" width="2" height="2" fill="#e9f5fc"/><rect x="24" y="56" width="2" height="2" fill="#6d778c"/><rect x="20" y="58" width="2" height="5" fill="#78f698"/><rect x="22" y="58" width="2" height="5" fill="#79d3fa"/><rect x="24" y="58" width="2" height="5" fill="#ff9f9d"/><rect x="26" y="58" width="2" height="5" fill="#fff48f"/><rect x="31" y="56" width="2" height="2" fill="#e9f5fc"/><rect x="33" y="56" width="2" height="2" fill="#6d778c"/><rect x="29" y="58" width="2" height="5" fill="#78f698"/><rect x="31" y="58" width="2" height="5" fill="#79d3fa"/><rect x="33" y="58" width="2" height="5" fill="#ff9f9d"/><rect x="35" y="58" width="2" height="5" fill="#fff48f"/><rect x="40" y="58" width="2" height="2" fill="#c9f7f5"/><rect x="38" y="60" width="6" height="5" fill="#c9f7f5"/><rect x="40" y="62" width="1" height="3" fill="#8fb0ae"/><rect x="43" y="62" width="1" height="3" fill="#8fb0ae"/><rect x="2" y="62" width="2" height="2" fill="#e9f5fc"/><rect x="4" y="62" width="2" height="2" fill="#6d778c"/><rect x="0" y="64" width="2" height="3" fill="#78f698"/><rect x="2" y="64" width="2" height="3" fill="#79d3fa"/><rect x="4" y="64" width="2" height="3" fill="#ff9f9d"/><rect x="6" y="64" width="2" height="3" fill="#fff48f"/><rect x="13" y="61" width="4" height="2" fill="#c9f7f5"/><rect x="11" y="63" width="8" height="3" fill="#c9f7f5"/><rect x="22" y="64" width="1" height="2" fill="#e9f5fc"/><rect x="23" y="64" width="1" height="2" fill="#6d778c"/><rect x="20" y="66" width="2" height="4" fill="#78f698"/><rect x="22" y="66" width="1" height="4" fill="#79d3fa"/><rect x="23" y="66" width="2" height="4" fill="#ff9f9d"/><rect x="25" y="66" width="1" height="4" fill="#fff48f"/><rect x="29" y="64" width="2" height="2" fill="#e9f5fc"/><rect x="31" y="64" width="2" height="2" fill="#6d778c"/><rect x="27" y="66" width="2" height="2" fill="#78f698"/><rect x="29" y="66" width="2" height="2" fill="#79d3fa"/><rect x="31" y="66" width="2" height="2" fill="#ff9f9d"/><rect x="33" y="66" width="2" height="2" fill="#fff48f"/><rect x="38" y="66" width="2" height="2" fill="#e9f5fc"/><rect x="40" y="66" width="2" height="2" fill="#6d778c"/><rect x="36" y="68" width="2" height="2" fill="#78f698"/><rect x="38" y="68" width="2" height="2" fill="#79d3fa"/><rect x="40" y="68" width="2" height="2" fill="#ff9f9d"/><rect x="42" y="68" width="2" height="2" fill="#fff48f"/><rect x="2" y="68" width="2" height="2" fill="#c9f7f5"/><rect x="0" y="70" width="6" height="3" fill="#c9f7f5"/><rect x="2" y="70" width="1" height="3" fill="#44615f"/><rect x="5" y="70" width="1" height="3" fill="#44615f"/><rect x="11" y="67" width="1" height="2" fill="#e9f5fc"/><rect x="12" y="67" width="1" height="2" fill="#6d778c"/><rect x="9" y="69" width="2" height="4" fill="#78f698"/><rect x="11" y="69" width="1" height="4" fill="#79d3fa"/><rect x="12" y="69" width="2" height="4" fill="#ff9f9d"/><rect x="14" y="69" width="1" height="4" fill="#fff48f"/><rect x="18" y="71" width="1" height="2" fill="#e9f5fc"/><rect x="19" y="71" width="1" height="2" fill="#6d778c"/><rect x="16" y="73" width="2" height="3" fill="#78f698"/><rect x="18" y="73" width="1" height="3" fill="#79d3fa"/><rect x="19" y="73" width="2" height="3" fill="#ff9f9d"/><rect x="21" y="73" width="1" height="3" fill="#fff48f"/><rect x="29" y="69" width="1" height="2" fill="#e9f5fc"/><rect x="30" y="69" width="1" height="2" fill="#6d778c"/><rect x="27" y="71" width="2" height="3" fill="#78f698"/><rect x="29" y="71" width="1" height="3" fill="#79d3fa"/><rect x="30" y="71" width="2" height="3" fill="#ff9f9d"/><rect x="32" y="71" width="1" height="3" fill="#fff48f"/><rect x="36" y="71" width="1" height="2" fill="#e9f5fc"/><rect x="37" y="71" width="1" height="2" fill="#6d778c"/><rect x="34" y="73" width="2" height="3" fill="#78f698"/><rect x="36" y="73" width="1" height="3" fill="#79d3fa"/><rect x="37" y="73" width="2" height="3" fill="#ff9f9d"/><rect x="39" y="73" width="1" height="3" fill="#fff48f"/><rect x="43" y="72" width="1" height="2" fill="#e9f5fc"/><rect x="44" y="72" width="1" height="2" fill="#6d778c"/><rect x="41" y="74" width="2" height="3" fill="#78f698"/><rect x="43" y="74" width="1" height="3" fill="#79d3fa"/><rect x="44" y="74" width="2" height="3" fill="#ff9f9d"/><rect x="46" y="74" width="1" height="3" fill="#fff48f"/><rect x="2" y="74" width="2" height="2" fill="#c9f7f5"/><rect x="0" y="76" width="6" height="2" fill="#c9f7f5"/><rect x="9" y="74" width="2" height="2" fill="#c9f7f5"/><rect x="7" y="76" width="6" height="2" fill="#c9f7f5"/><rect x="25" y="75" width="1" height="2" fill="#e9f5fc"/><rect x="26" y="75" width="1" height="2" fill="#6d778c"/><rect x="23" y="77" width="2" height="2" fill="#78f698"/><rect x="25" y="77" width="1" height="2" fill="#79d3fa"/><rect x="26" y="77" width="2" height="2" fill="#ff9f9d"/><rect x="28" y="77" width="1" height="2" fill="#fff48f"/><rect x="16" y="77" width="2" height="2" fill="#c9f7f5"/><rect x="14" y="79" width="6" height="1" fill="#c9f7f5"/><rect x="32" y="77" width="2" height="2" fill="#c9f7f5"/><rect x="30" y="79" width="6" height="1" fill="#c9f7f5"/><rect x="39" y="78" width="2" height="2" fill="#c9f7f5"/><rect x="37" y="80" width="6" height="1" fill="#c9f7f5"/><rect x="2" y="79" width="2" height="2" fill="#c9f7f5"/><rect x="0" y="81" width="6" height="1" fill="#c9f7f5"/><rect x="2" y="81" width="1" height="1" fill="#44615f"/><rect x="5" y="81" width="1" height="1" fill="#44615f"/><rect x="9" y="79" width="2" height="2" fill="#c9f7f5"/><rect x="7" y="81" width="6" height="1" fill="#c9f7f5"/><rect x="9" y="81" width="1" height="1" fill="#44615f"/><rect x="12" y="81" width="1" height="1" fill="#44615f"/><rect x="23" y="80" width="1" height="2" fill="#e9f5fc"/><rect x="24" y="80" width="1" height="2" fill="#6d778c"/><rect x="21" y="82" width="2" height="1" fill="#78f698"/><rect x="23" y="82" width="1" height="1" fill="#79d3fa"/><rect x="24" y="82" width="2" height="1" fill="#ff9f9d"/><rect x="26" y="82" width="1" height="1" fill="#fff48f"/><rect x="16" y="81" width="1" height="2" fill="#e9f5fc"/><rect x="17" y="81" width="1" height="2" fill="#6d778c"/><rect x="14" y="83" width="2" height="1" fill="#78f698"/><rect x="16" y="83" width="1" height="1" fill="#79d3fa"/><rect x="17" y="83" width="2" height="1" fill="#ff9f9d"/><rect x="19" y="83" width="1" height="1" fill="#fff48f"/><rect x="30" y="81" width="1" height="2" fill="#e9f5fc"/><rect x="31" y="81" width="1" height="2" fill="#6d778c"/><rect x="28" y="83" width="2" height="1" fill="#78f698"/><rect x="30" y="83" width="1" height="1" fill="#79d3fa"/><rect x="31" y="83" width="2" height="1" fill="#ff9f9d"/><rect x="33" y="83" width="1" height="1" fill="#fff48f"/><rect x="37" y="82" width="1" height="2" fill="#e9f5fc"/><rect x="38" y="82" width="1" height="2" fill="#6d778c"/><rect x="35" y="84" width="2" height="1" fill="#78f698"/><rect x="37" y="84" width="1" height="1" fill="#79d3fa"/><rect x="38" y="84" width="2" height="1" fill="#ff9f9d"/><rect x="40" y="84" width="1" height="1" fill="#fff48f"/><rect x="2" y="83" width="1" height="2" fill="#e9f5fc"/><rect x="3" y="83" width="1" height="2" fill="#6d778c"/><rect x="0" y="85" width="2" height="1" fill="#78f698"/><rect x="2" y="85" width="1" height="1" fill="#79d3fa"/><rect x="3" y="85" width="2" height="1" fill="#ff9f9d"/><rect x="5" y="85" width="1" height="1" fill="#fff48f"/><rect x="81" y="57" width="1" height="2" fill="#e9f5fc"/><rect x="82" y="57" width="1" height="2" fill="#6d778c"/><rect x="79" y="59" width="2" height="1" fill="#78f698"/><rect x="81" y="59" width="1" height="1" fill="#79d3fa"/><rect x="82" y="59" width="2" height="1" fill="#ff9f9d"/><rect x="84" y="59" width="1" height="1" fill="#fff48f"/><rect x="72" y="59" width="2" height="2" fill="#e9f5fc"/><rect x="74" y="59" width="2" height="2" fill="#6d778c"/><rect x="70" y="61" width="2" height="1" fill="#78f698"/><rect x="72" y="61" width="2" height="1" fill="#79d3fa"/><rect x="74" y="61" width="2" height="1" fill="#ff9f9d"/><rect x="76" y="61" width="2" height="1" fill="#fff48f"/><rect x="54" y="61" width="4" height="2" fill="#c9f7f5"/><rect x="52" y="63" width="8" height="3" fill="#c9f7f5"/><rect x="63" y="61" width="2" height="2" fill="#e9f5fc"/><rect x="65" y="61" width="2" height="2" fill="#6d778c"/><rect x="61" y="63" width="2" height="3" fill="#78f698"/><rect x="63" y="63" width="2" height="3" fill="#79d3fa"/><rect x="65" y="63" width="2" height="3" fill="#ff9f9d"/><rect x="67" y="63" width="2" height="3" fill="#fff48f"/><rect x="72" y="63" width="1" height="2" fill="#e9f5fc"/><rect x="73" y="63" width="1" height="2" fill="#6d778c"/><rect x="70" y="65" width="2" height="3" fill="#78f698"/><rect x="72" y="65" width="1" height="3" fill="#79d3fa"/><rect x="73" y="65" width="2" height="3" fill="#ff9f9d"/><rect x="75" y="65" width="1" height="3" fill="#fff48f"/><rect x="79" y="63" width="2" height="2" fill="#c9f7f5"/><rect x="77" y="65" width="6" height="1" fill="#c9f7f5"/><rect x="47" y="65" width="1" height="2" fill="#e9f5fc"/><rect x="48" y="65" width="1" height="2" fill="#6d778c"/><rect x="45" y="67" width="2" height="4" fill="#78f698"/><rect x="47" y="67" width="1" height="4" fill="#79d3fa"/><rect x="48" y="67" width="2" height="4" fill="#ff9f9d"/><rect x="50" y="67" width="1" height="4" fill="#fff48f"/><rect x="54" y="67" width="4" height="2" fill="#c9f7f5"/><rect x="52" y="69" width="8" height="1" fill="#c9f7f5"/><rect x="63" y="67" width="4" height="2" fill="#c9f7f5"/><rect x="61" y="69" width="8" height="1" fill="#c9f7f5"/><rect x="63" y="69" width="2" height="1" fill="#fff"/><rect x="67" y="69" width="2" height="1" fill="#fff"/><rect x="81" y="67" width="1" height="2" fill="#e9f5fc"/><rect x="82" y="67" width="1" height="2" fill="#6d778c"/><rect x="79" y="69" width="2" height="1" fill="#78f698"/><rect x="81" y="69" width="1" height="1" fill="#79d3fa"/><rect x="82" y="69" width="2" height="1" fill="#ff9f9d"/><rect x="84" y="69" width="1" height="1" fill="#fff48f"/><rect x="72" y="69" width="2" height="2" fill="#e9f5fc"/><rect x="74" y="69" width="2" height="2" fill="#6d778c"/><rect x="70" y="71" width="2" height="1" fill="#78f698"/><rect x="72" y="71" width="2" height="1" fill="#79d3fa"/><rect x="74" y="71" width="2" height="1" fill="#ff9f9d"/><rect x="76" y="71" width="2" height="1" fill="#fff48f"/><rect x="54" y="71" width="2" height="2" fill="#e9f5fc"/><rect x="56" y="71" width="2" height="2" fill="#6d778c"/><rect x="52" y="73" width="2" height="1" fill="#78f698"/><rect x="54" y="73" width="2" height="1" fill="#79d3fa"/><rect x="56" y="73" width="2" height="1" fill="#ff9f9d"/><rect x="58" y="73" width="2" height="1" fill="#fff48f"/><rect x="63" y="71" width="1" height="2" fill="#e9f5fc"/><rect x="64" y="71" width="1" height="2" fill="#6d778c"/><rect x="61" y="73" width="2" height="3" fill="#78f698"/><rect x="63" y="73" width="1" height="3" fill="#79d3fa"/><rect x="64" y="73" width="2" height="3" fill="#ff9f9d"/><rect x="66" y="73" width="1" height="3" fill="#fff48f"/><rect x="84" y="71" width="1" height="2" fill="#e9f5fc"/><rect x="85" y="71" width="1" height="2" fill="#6d778c"/><rect x="82" y="73" width="2" height="1" fill="#78f698"/><rect x="84" y="73" width="1" height="1" fill="#79d3fa"/><rect x="85" y="73" width="2" height="1" fill="#ff9f9d"/><rect x="87" y="73" width="1" height="1" fill="#fff48f"/><rect x="70" y="73" width="2" height="2" fill="#c9f7f5"/><rect x="68" y="75" width="6" height="2" fill="#c9f7f5"/><rect x="70" y="75" width="1" height="2" fill="#fff"/><rect x="73" y="75" width="1" height="2" fill="#fff"/><rect x="77" y="73" width="1" height="2" fill="#e9f5fc"/><rect x="78" y="73" width="1" height="2" fill="#6d778c"/><rect x="75" y="75" width="2" height="2" fill="#78f698"/><rect x="77" y="75" width="1" height="2" fill="#79d3fa"/><rect x="78" y="75" width="2" height="2" fill="#ff9f9d"/><rect x="80" y="75" width="1" height="2" fill="#fff48f"/><rect x="50" y="75" width="1" height="2" fill="#e9f5fc"/><rect x="51" y="75" width="1" height="2" fill="#6d778c"/><rect x="48" y="77" width="2" height="2" fill="#78f698"/><rect x="50" y="77" width="1" height="2" fill="#79d3fa"/><rect x="51" y="77" width="2" height="2" fill="#ff9f9d"/><rect x="53" y="77" width="1" height="2" fill="#fff48f"/><rect x="57" y="77" width="2" height="2" fill="#c9f7f5"/><rect x="55" y="79" width="6" height="1" fill="#c9f7f5"/><rect x="64" y="78" width="2" height="2" fill="#c9f7f5"/><rect x="62" y="80" width="6" height="1" fill="#c9f7f5"/><rect x="71" y="78" width="2" height="2" fill="#c9f7f5"/><rect x="69" y="80" width="6" height="1" fill="#c9f7f5"/><rect x="78" y="78" width="2" height="2" fill="#c9f7f5"/><rect x="76" y="80" width="6" height="1" fill="#c9f7f5"/><rect x="78" y="80" width="1" height="1" fill="#44615f"/><rect x="81" y="80" width="1" height="1" fill="#44615f"/><rect x="46" y="80" width="1" height="2" fill="#e9f5fc"/><rect x="47" y="80" width="1" height="2" fill="#6d778c"/><rect x="44" y="82" width="2" height="1" fill="#78f698"/><rect x="46" y="82" width="1" height="1" fill="#79d3fa"/><rect x="47" y="82" width="2" height="1" fill="#ff9f9d"/><rect x="49" y="82" width="1" height="1" fill="#fff48f"/><rect x="53" y="81" width="1" height="2" fill="#e9f5fc"/><rect x="54" y="81" width="1" height="2" fill="#6d778c"/><rect x="51" y="83" width="2" height="1" fill="#78f698"/><rect x="53" y="83" width="1" height="1" fill="#79d3fa"/><rect x="54" y="83" width="2" height="1" fill="#ff9f9d"/><rect x="56" y="83" width="1" height="1" fill="#fff48f"/><rect x="60" y="82" width="1" height="2" fill="#e9f5fc"/><rect x="61" y="82" width="1" height="2" fill="#6d778c"/><rect x="58" y="84" width="2" height="1" fill="#78f698"/><rect x="60" y="84" width="1" height="1" fill="#79d3fa"/><rect x="61" y="84" width="2" height="1" fill="#ff9f9d"/><rect x="63" y="84" width="1" height="1" fill="#fff48f"/><rect x="67" y="82" width="1" height="2" fill="#e9f5fc"/><rect x="68" y="82" width="1" height="2" fill="#6d778c"/><rect x="65" y="84" width="2" height="1" fill="#78f698"/><rect x="67" y="84" width="1" height="1" fill="#79d3fa"/><rect x="68" y="84" width="2" height="1" fill="#ff9f9d"/><rect x="70" y="84" width="1" height="1" fill="#fff48f"/><rect x="74" y="82" width="1" height="2" fill="#e9f5fc"/><rect x="75" y="82" width="1" height="2" fill="#6d778c"/><rect x="72" y="84" width="2" height="1" fill="#78f698"/><rect x="74" y="84" width="1" height="1" fill="#79d3fa"/><rect x="75" y="84" width="2" height="1" fill="#ff9f9d"/><rect x="77" y="84" width="1" height="1" fill="#fff48f"/><rect x="81" y="82" width="1" height="2" fill="#e9f5fc"/><rect x="82" y="82" width="1" height="2" fill="#6d778c"/><rect x="79" y="84" width="2" height="1" fill="#78f698"/><rect x="81" y="84" width="1" height="1" fill="#79d3fa"/><rect x="82" y="84" width="2" height="1" fill="#ff9f9d"/><rect x="84" y="84" width="1" height="1" fill="#fff48f"/></svg></div>
<div class="a" style="left:2px;top:712px;width:458px;height:330px;background:#181b20;"></div>
<svg style="left:0px;top:0px" width="60" height="38" viewBox="0 0 60 38"><path d="M24.300 7.800L44.900 6L42.300 18.200L22.850 15.700Z" fill="#fff"/><path d="M14.300 17.900L22.100 16.200L41.400 19.200L33.600 23.500Z" fill="#fff"/><path d="M19.600 20.600L23 21.700L22.100 23.300L18.500 24Z M32 23.500L37.100 22.300L36.700 25.500L31.200 29.100Z" fill="#fff"/></svg>
<div class="t" style="left:52.3px;top:6.2px;font-size:22.6px;color:#ffffff;font-family:'Liberation Sans', sans-serif;transform:scaleX(1.078);transform-origin:0 0">Blockbench</div>
<div class="t cj" style="left:201.0px;top:7.5px;font-size:20.8px;color:#e9e9f1;">文件</div>
<div class="t cj" style="left:263.3px;top:7.5px;font-size:20.8px;color:#e9e9f1;">编辑</div>
<div class="t cj" style="left:325.6px;top:7.5px;font-size:20.8px;color:#e9e9f1;">图像</div>
<div class="t cj" style="left:387.9px;top:7.5px;font-size:20.8px;color:#e9e9f1;">工具</div>
<div class="t cj" style="left:450.2px;top:7.5px;font-size:20.8px;color:#e9e9f1;">视图</div>
<div class="t cj" style="left:512.5px;top:7.5px;font-size:20.8px;color:#e9e9f1;">帮助</div>
<div class="t" style="left:1052px;top:11.2px;font-size:18.05px;color:#878b96;">AgesPortal2.0 - Blockbench</div>
<div class="a" style="left:1782px;top:17px;width:16px;height:1.6px;background:#d3d3de;"></div>
<svg style="left:1834px;top:10px" width="17" height="17" viewBox="0 0 17 17"><rect x="0.8" y="4.2" width="12" height="12" fill="none" stroke="#d3d3de" stroke-width="1.5"/><path d="M4.2 4V0.8H16.2V12.8H13" fill="none" stroke="#d3d3de" stroke-width="1.5"/></svg>
<svg style="left:1886px;top:10px" width="16" height="16" viewBox="0 0 16 16"><path d="M0.5 0.5L15.5 15.5M15.5 0.5L0.5 15.5" stroke="#d3d3de" stroke-width="1.7"/></svg>
<svg style="left:18px;top:48px" width="27" height="25" viewBox="0 0 27 25"><path d="M7.100 3.300A5.850 2.400 0 0 1 18.800 3.300V13.800A5.850 2.400 0 0 1 7.100 13.800Z" fill="#d3d3de"/><ellipse cx="12.950" cy="3.700" rx="3.200" ry="0.950" fill="#15181d"/><path d="M18.800 5H20.300A3.200 3.200 0 0 1 20.300 11.400H18.800" fill="none" stroke="#d3d3de" stroke-width="1.700"/><path d="M0.200 18L7.400 15.300A5.850 2.400 0 0 0 18.500 15.300L26.100 18L13.100 24.100Z" fill="#d3d3de"/></svg>
<div class="t" style="left:50px;top:50.5px;font-size:18px;color:#dedee8;">AgesPortal2.0</div>
<svg style="left:282.2px;top:52px" width="14" height="14" viewBox="0 0 14 14"><path d="M1 1L13 13M13 1L1 13" stroke="#e6e6ee" stroke-width="2"/></svg>
<svg style="left:321.5px;top:50.5px" width="16" height="16" viewBox="0 0 16 16"><path d="M8 0V16M0 8H16" stroke="#e6e6ee" stroke-width="2.1"/></svg>
<div class="t cj" style="left:15px;top:95px;font-size:21.4px;color:#7d8290;">绘画模式</div>
<svg style="left:113px;top:96.5px" width="6" height="20" viewBox="0 0 6 20"><circle cx="3" cy="3.75" r="2.05" fill="#7d8290"/><circle cx="3" cy="10.0" r="2.05" fill="#7d8290"/><circle cx="3" cy="16.25" r="2.05" fill="#7d8290"/></svg>
<div class="t" style="left:272px;top:96.3px;font-size:18.2px;color:#d3d3de;">128</div>
<div class="t" style="left:304.2px;top:93.6px;font-size:22.6px;color:#d3d3de;font-family:'DejaVu Sans','Liberation Sans',sans-serif">✕</div>
<div class="t" style="left:323.3px;top:96.3px;font-size:18.2px;color:#d3d3de;">128</div>
<svg style="left:400px;top:94px" width="21" height="21" viewBox="0 0 21 21"><path d="M1 7V1H7M14 1H20V7M20 14V20H14M7 20H1V14" fill="none" stroke="#a9acb8" stroke-width="2.4"/></svg>
<svg style="left:436px;top:100px" width="14" height="8" viewBox="0 0 14 8"><path d="M1 1L7 7L13 1" fill="none" stroke="#8e919d" stroke-width="2.2"/></svg>
<svg style="left:477px;top:92px" width="26" height="24" viewBox="0 0 26 24"><path d="M24.500 0.600c1.400 1 1.300 2.700 0.400 4.300L16.500 16.500c-0.700 1-1.700 1.400-2.700 1l-3.300-2.500c-0.600-0.800-0.600-1.900 0.200-2.800L20.500 1.500c1.200-1.300 2.800-1.800 4-0.900z" fill="#d3d3de"/><path d="M9.300 16.200l3.400 2.600c0.300 2.900-2.300 5-5.600 5-2.900 0-5.300-0.600-6.900-2.300 2.300-0.500 2.700-1.800 3.300-3.300 0.900-2.200 3.400-3.200 5.800-2z" fill="#d3d3de"/></svg>
<svg style="left:510px;top:102px" width="12" height="6" viewBox="0 0 12 6"><path d="M0 0H12L6.0 6Z" fill="#d3d3de"/></svg>
<svg style="left:541px;top:92px" width="23" height="24" viewBox="0 0 23 24"><path d="M11.500 0a4.300 4.300 0 0 1 4.300 4.300c0 1.700-1.300 3.100-1.500 4.800-0.100 1.200 0.500 1.900 1.700 1.900h3.800a3.200 3.200 0 0 1 3.200 3.200v3.300h-23v-3.300a3.200 3.200 0 0 1 3.200-3.200h3.800c1.200 0 1.800-0.700 1.700-1.900-0.200-1.700-1.500-3.100-1.500-4.800A4.300 4.300 0 0 1 11.500 0z" fill="#d3d3de"/><rect x="2.300" y="19.300" width="18.400" height="3.700" fill="#d3d3de"/></svg>
<svg style="left:587px;top:90.5px" width="27" height="27" viewBox="0 0 24 24"><path d="M16.56 8.94L7.62 0 6.21 1.41l2.38 2.38-5.15 5.15c-.59.59-.59 1.54 0 2.12l5.5 5.5c.29.29.68.44 1.06.44s.77-.15 1.06-.44l5.5-5.5c.59-.58.59-1.53 0-2.12zM5.21 10L10 5.21 14.79 10H5.21zM19 11.5s-2 2.17-2 3.5c0 1.1.9 2 2 2s2-.9 2-2c0-1.33-2-3.5-2-3.5zM2 20h20v4H2v-4z" fill="#d3d3de" /></svg>
<svg style="left:636px;top:93px" width="25" height="22" viewBox="0 0 25 22"><path d="M12.800 0.900a2.500 2.500 0 0 1 3.500 0l7.300 7.300a2.500 2.500 0 0 1 0 3.500L15.500 19.800H24v2.200H7.200L1.400 16.200a2.500 2.500 0 0 1 0-3.500z M3.800 13.400l5.200 5.200h3l3.700-3.700-6.700-6.700z" fill="#d3d3de" fill-rule="evenodd"/></svg>
<div class="a" style="left:672px;top:86px;width:45.5px;height:37.5px;background:#3e90ff;border-radius:5px"></div>
<svg style="left:683px;top:93px" width="24" height="24" viewBox="0 0 24 24"><path d="M20.71 5.63l-2.34-2.34c-.39-.39-1.02-.39-1.41 0l-3.12 3.12-1.93-1.91-1.41 1.41 1.42 1.42L3 16.25V21h4.75l8.92-8.92 1.42 1.42 1.41-1.41-1.92-1.92 3.12-3.12c.4-.4.4-1.03.01-1.42zM6.92 19L5 17.08l8.06-8.06 1.92 1.92L6.92 19z" fill="#0c0e12" /></svg>
<svg style="left:730px;top:92px" width="25.5" height="25.5" viewBox="0 0 24 24"><path d="M12 2l5.5 9h-11z M6.5 13C8.99 13 11 15.01 11 17.5S8.99 22 6.500 22 2 19.990 2 17.5 4.010 13 6.500 13z M13 13.5h8v8h-8z" fill="#d3d3de" /></svg>
<svg style="left:779px;top:93px" width="22" height="22" viewBox="0 0 22 22"><rect x="0" y="0" width="22" height="22" rx="2.500" fill="#d3d3de"/><rect x="2.0" y="10.0" width="1.400" height="1.400" fill="#1c2027"/><rect x="4.6" y="10.0" width="1.400" height="1.400" fill="#1c2027"/><rect x="7.2" y="10.0" width="1.400" height="1.400" fill="#1c2027"/><rect x="9.8" y="10.0" width="1.400" height="1.400" fill="#1c2027"/><rect x="12.4" y="10.0" width="1.400" height="1.400" fill="#1c2027"/><rect x="15.0" y="10.0" width="1.400" height="1.400" fill="#1c2027"/><rect x="17.6" y="10.0" width="1.400" height="1.400" fill="#1c2027"/><rect x="3.3" y="12.6" width="1.400" height="1.400" fill="#1c2027"/><rect x="5.9" y="12.6" width="1.400" height="1.400" fill="#1c2027"/><rect x="8.5" y="12.6" width="1.400" height="1.400" fill="#1c2027"/><rect x="11.1" y="12.6" width="1.400" height="1.400" fill="#1c2027"/><rect x="13.7" y="12.6" width="1.400" height="1.400" fill="#1c2027"/><rect x="16.3" y="12.6" width="1.400" height="1.400" fill="#1c2027"/><rect x="18.9" y="12.6" width="1.400" height="1.400" fill="#1c2027"/><rect x="2.0" y="15.2" width="1.400" height="1.400" fill="#1c2027"/><rect x="4.6" y="15.2" width="1.400" height="1.400" fill="#1c2027"/><rect x="7.2" y="15.2" width="1.400" height="1.400" fill="#1c2027"/><rect x="9.8" y="15.2" width="1.400" height="1.400" fill="#1c2027"/><rect x="12.4" y="15.2" width="1.400" height="1.400" fill="#1c2027"/><rect x="15.0" y="15.2" width="1.400" height="1.400" fill="#1c2027"/><rect x="17.6" y="15.2" width="1.400" height="1.400" fill="#1c2027"/><rect x="3.3" y="17.8" width="1.400" height="1.400" fill="#1c2027"/><rect x="5.9" y="17.8" width="1.400" height="1.400" fill="#1c2027"/><rect x="8.5" y="17.8" width="1.400" height="1.400" fill="#1c2027"/><rect x="11.1" y="17.8" width="1.400" height="1.400" fill="#1c2027"/><rect x="13.7" y="17.8" width="1.400" height="1.400" fill="#1c2027"/><rect x="16.3" y="17.8" width="1.400" height="1.400" fill="#1c2027"/><rect x="18.9" y="17.8" width="1.400" height="1.400" fill="#1c2027"/></svg>
<svg style="left:825px;top:94px" width="22" height="22" viewBox="0 0 22 22"><rect x="1.300" y="1.300" width="19.400" height="19.400" fill="none" stroke="#d3d3de" stroke-width="2.500" stroke-dasharray="2.500 2.350"/></svg>
<svg style="left:858px;top:102px" width="11" height="5.5" viewBox="0 0 11 5.5"><path d="M0 0H11L5.5 5.5Z" fill="#d3d3de"/></svg>
<svg style="left:887px;top:92px" width="25" height="25" viewBox="0 0 24 24"><path d="M10 9h4V6h3l-5-5-5 5h3v3zm-1 1H6V7l-5 5 5 5v-3h3v-4zm14 2l-5-5v3h-3v4h3v3l5-5zm-9 3h-4v3H7l5 5 5-5h-3v-3z" fill="#d3d3de" /></svg>
<svg style="left:928px;top:93.4px" width="6" height="20" viewBox="0 0 6 20"><circle cx="3" cy="3.75" r="2.05" fill="#7d8290"/><circle cx="3" cy="10.0" r="2.05" fill="#7d8290"/><circle cx="3" cy="16.25" r="2.05" fill="#7d8290"/></svg>
<div class="a" style="left:942px;top:86px;width:60px;height:37.5px;background:#3e90ff;border-radius:5px"></div>
<svg style="left:953px;top:91px" width="20" height="26" viewBox="0 0 20 26"><path d="M7 4.800H1.200V22.400H7" fill="none" stroke="#0c0e12" stroke-width="2.400"/><path d="M10.400 0.500V26" stroke="#0c0e12" stroke-width="2.100"/><path d="M13 4.800H18.800V22.400H13" fill="none" stroke="#0c0e12" stroke-width="2.400" stroke-dasharray="2.300 2.100"/></svg>
<svg style="left:985.5px;top:102px" width="11.5" height="5.8" viewBox="0 0 11.5 5.8"><path d="M0 0H11.5L5.75 5.8Z" fill="#d6e6ff"/></svg>
<svg style="left:1017.2px;top:92.8px" width="20.6" height="20.6" viewBox="0 0 20.600 20.600"><rect x="0" y="0" width="20.600" height="20.600" rx="2.600" fill="#d3d3de"/><rect x="2.80" y="2.60" width="2.150" height="2.200" fill="#20242c"/><rect x="7.10" y="2.60" width="2.150" height="2.200" fill="#20242c"/><rect x="11.40" y="2.60" width="2.150" height="2.200" fill="#20242c"/><rect x="15.70" y="2.60" width="2.150" height="2.200" fill="#20242c"/><rect x="4.95" y="4.80" width="2.150" height="2.200" fill="#20242c"/><rect x="9.25" y="4.80" width="2.150" height="2.200" fill="#20242c"/><rect x="13.55" y="4.80" width="2.150" height="2.200" fill="#20242c"/><rect x="2.80" y="7.00" width="2.150" height="2.200" fill="#20242c"/><rect x="7.10" y="7.00" width="2.150" height="2.200" fill="#20242c"/><rect x="11.40" y="7.00" width="2.150" height="2.200" fill="#20242c"/><rect x="15.70" y="7.00" width="2.150" height="2.200" fill="#20242c"/><rect x="4.95" y="9.20" width="2.150" height="2.200" fill="#20242c"/><rect x="9.25" y="9.20" width="2.150" height="2.200" fill="#20242c"/><rect x="13.55" y="9.20" width="2.150" height="2.200" fill="#20242c"/><rect x="2.80" y="11.40" width="2.150" height="2.200" fill="#20242c"/><rect x="7.10" y="11.40" width="2.150" height="2.200" fill="#20242c"/><rect x="11.40" y="11.40" width="2.150" height="2.200" fill="#20242c"/><rect x="15.70" y="11.40" width="2.150" height="2.200" fill="#20242c"/><rect x="4.95" y="13.60" width="2.150" height="2.200" fill="#20242c"/><rect x="9.25" y="13.60" width="2.150" height="2.200" fill="#20242c"/><rect x="13.55" y="13.60" width="2.150" height="2.200" fill="#20242c"/><rect x="2.80" y="15.80" width="2.150" height="2.200" fill="#20242c"/><rect x="7.10" y="15.80" width="2.150" height="2.200" fill="#20242c"/><rect x="11.40" y="15.80" width="2.150" height="2.200" fill="#20242c"/><rect x="15.70" y="15.80" width="2.150" height="2.200" fill="#20242c"/></svg>
<svg style="left:1065px;top:95px" width="19.5" height="18.5" viewBox="0 0 19.500 18.500"><path d="M6.800 0V18.500M13.700 0V18.500M0 5.800H19.500M0 12.700H19.500" stroke="#d3d3de" stroke-width="2.400"/></svg>
<svg style="left:1110px;top:94px" width="21.3" height="20.7" viewBox="0 0 21.300 20.700"><rect x="0" y="0" width="9.900" height="9.500" fill="#d3d3de"/><rect x="11.600" y="0" width="9.700" height="9.500" fill="#d3d3de"/><rect x="0" y="11.200" width="9.900" height="9.500" fill="#d3d3de"/><rect x="11.600" y="11.200" width="9.700" height="9.500" fill="#d3d3de"/></svg>
<svg style="left:1142.5px;top:102px" width="11.3" height="5.8" viewBox="0 0 11.3 5.8"><path d="M0 0H11.3L5.65 5.8Z" fill="#d3d3de"/></svg>
<svg style="left:1165.4px;top:93.4px" width="6" height="20" viewBox="0 0 6 20"><circle cx="3" cy="3.75" r="2.05" fill="#7d8290"/><circle cx="3" cy="10.0" r="2.05" fill="#7d8290"/><circle cx="3" cy="16.25" r="2.05" fill="#7d8290"/></svg>
<svg style="left:1511px;top:92.5px" width="22" height="24" viewBox="0 0 22 24"><path d="M11 0.500L21 5.500V17.500L11 23.500L1 17.500V5.500Z" fill="#3e90ff"/><path d="M4.200 7.200L11 11V19.800M11 11L17.800 7.200" fill="none" stroke="#1d2128" stroke-width="2.300"/></svg>
<div class="t cj" style="left:1541px;top:94.5px;font-size:21.9px;color:#e4e4ee;">编辑模式</div>
<div class="a" style="left:1637.5px;top:86px;width:136.5px;height:37.5px;background:#3e90ff;border-radius:5px"></div>
<svg style="left:1647px;top:93px" width="26" height="24" viewBox="0 0 26 24"><path d="M24.500 0.600c1.400 1 1.300 2.700 0.400 4.300L16.500 16.500c-0.700 1-1.700 1.400-2.700 1l-3.300-2.500c-0.600-0.800-0.600-1.900 0.200-2.800L20.500 1.500c1.200-1.300 2.800-1.800 4-0.900z" fill="#0c0e12"/><path d="M9.300 16.200l3.400 2.600c0.300 2.900-2.300 5-5.600 5-2.900 0-5.300-0.600-6.900-2.300 2.300-0.500 2.700-1.800 3.300-3.300 0.900-2.200 3.400-3.200 5.800-2z" fill="#0c0e12"/></svg>
<div class="t cj" style="left:1678px;top:94.5px;font-size:21.9px;color:#0c0e12;">绘画模式</div>
<svg style="left:1785px;top:94.5px" width="23" height="20" viewBox="0 0 23 20"><path d="M0 0.500L3 0L5.500 4.500L8.500 4L6 -0.500L9.500 -1L12 3.500L15 3L12.500 -1.500L16 -2L18.500 2.500L21.500 2L19 -2.500L23 -3V6H0Z" fill="#3e90ff" transform="translate(0,3)"/><rect x="0" y="8" width="23" height="12" rx="1.500" fill="#3e90ff"/></svg>
<div class="t cj" style="left:1815.5px;top:94.5px;font-size:21.9px;color:#e4e4ee;">动画模式</div>
<div class="t" style="left:146px;top:596.5px;font-size:18.3px;color:#e4e4ee;width:122px;overflow:hidden;height:24px;line-height:22px">AgesPortal.png</div>
<div class="t" style="left:321px;top:598.5px;font-size:16.6px;color:#7d8290;">100%</div>
<svg style="left:424px;top:594px" width="24" height="24" viewBox="0 0 24 24"><rect x="1.200" y="1.300" width="14.800" height="14.800" rx="2.600" fill="none" stroke="#d3d3de" stroke-width="1.900"/><rect x="5.800" y="6" width="18.800" height="18.800" rx="4" fill="#1d2128"/><rect x="7.300" y="7.500" width="16.300" height="16.300" rx="3" fill="#d3d3de"/></svg>
<div class="t cj" style="left:15px;top:640.5px;font-size:21.2px;color:#7d8290;">纹理</div>
<svg style="left:69px;top:642px" width="6" height="20" viewBox="0 0 6 20"><circle cx="3" cy="3.75" r="2.05" fill="#7d8290"/><circle cx="3" cy="10.0" r="2.05" fill="#7d8290"/><circle cx="3" cy="16.25" r="2.05" fill="#7d8290"/></svg>
<svg style="left:436.4px;top:644.5px" width="14.4" height="8.6" viewBox="0 0 14.4 8.6"><path d="M1.200 1.200L7.2 7.199999999999999L13.200000000000001 1.200" fill="none" stroke="#a9acb8" stroke-width="2.6"/></svg>
<svg style="left:12.5px;top:679.5px" width="26" height="26" viewBox="0 0 24 24"><path d="M4 6H2v14c0 1.1.9 2 2 2h14v-2H4V6zm16-4H8c-1.1 0-2 .9-2 2v12c0 1.1.9 2 2 2h12c1.1 0 2-.9 2-2V4c0-1.1-.9-2-2-2zm-1 9h-4v4h-2v-4H9V9h4V5h2v4h4v2z" fill="#d3d3de" /></svg>
<svg style="left:63px;top:682px" width="21" height="21" viewBox="0 0 21 21"><rect x="0" y="0" width="21" height="21" rx="2.600" fill="#d3d3de"/><path d="M2.300 11.200C6 10.500 8 12.500 10.500 10.500L16 6.300H18.700V18.700H2.300Z" fill="#1d2128"/><path d="M14.500 12.200h1.700v2.500h2.500v1.700h-2.500v2.500h-1.700v-2.500h-2.500v-1.700h2.500z" fill="#d3d3de"/></svg>
<svg style="left:107.5px;top:679.5px" width="27" height="27" viewBox="0 0 24 24"><path d="M22 16V4c0-1.1-.9-2-2-2H8c-1.1 0-2 .9-2 2v12c0 1.1.9 2 2 2h12c1.1 0 2-.9 2-2zm-11-4l2.03 2.71L16 11l4 5H8l3-4zM2 6v14c0 1.1.9 2 2 2h14v-2H4V6H2z" fill="#d3d3de" /></svg>
<svg style="left:157px;top:682px" width="22" height="22" viewBox="0 0 22 22"><rect x="0" y="0" width="9.500" height="9.500" fill="#d3d3de"/><rect x="12" y="0" width="9.500" height="9.500" fill="#d3d3de"/><rect x="0" y="12" width="9.500" height="9.500" fill="#d3d3de"/><path d="M15.500 12h2.500v3.500h3.500v2.500h-3.500v3.500h-2.500v-3.500h-3.500v-2.500h3.500z" fill="#d3d3de"/></svg>
<svg style="left:404px;top:679px" width="29" height="29" viewBox="0 0 24 24"><path d="M15.5 14h-.79l-.28-.27C15.41 12.59 16 11.11 16 9.5 16 5.91 13.09 3 9.5 3S3 5.91 3 9.5 5.91 16 9.5 16c1.61 0 3.09-.59 4.23-1.57l.27.28v.79l5 4.99L20.49 19l-4.99-5zm-6 0C7.01 14 5 11.99 5 9.5S7.01 5 9.5 5 14 7.01 14 9.5 11.99 14 9.5 14z" fill="#e6e6ee" /></svg>
<svg style="left:446px;top:682.5px" width="6" height="20" viewBox="0 0 6 20"><circle cx="3" cy="3.75" r="2.05" fill="#7d8290"/><circle cx="3" cy="10.0" r="2.05" fill="#7d8290"/><circle cx="3" cy="16.25" r="2.05" fill="#7d8290"/></svg>
<svg style="left:12px;top:713px" width="40" height="40" viewBox="0 0 40 40"><rect x="0" y="0.0" width="2" height="2" fill="#c9f7f5"/><rect x="7" y="0.0" width="3" height="2" fill="#c9f7f5"/><rect x="14" y="0.0" width="4" height="2" fill="#ff9f9d"/><rect x="21" y="0.0" width="5" height="2" fill="#e9f5fc"/><rect x="28" y="0.0" width="2" height="2" fill="#dff8f6"/><rect x="35" y="0.0" width="3" height="2" fill="#79d3fa"/><rect x="5" y="0.0" width="4" height="2" fill="#c9f7f5"/><rect x="12" y="0.0" width="5" height="2" fill="#c9f7f5"/><rect x="19" y="0.0" width="2" height="2" fill="#78f698"/><rect x="3" y="2.6" width="3" height="2" fill="#78f698"/><rect x="10" y="2.6" width="4" height="2" fill="#e9f5fc"/><rect x="17" y="2.6" width="5" height="2" fill="#fff48f"/><rect x="24" y="2.6" width="2" height="2" fill="#c9f7f5"/><rect x="31" y="2.6" width="3" height="2" fill="#c9f7f5"/><rect x="1" y="2.6" width="4" height="2" fill="#ff9f9d"/><rect x="8" y="2.6" width="5" height="2" fill="#e9f5fc"/><rect x="15" y="2.6" width="2" height="2" fill="#dff8f6"/><rect x="22" y="2.6" width="3" height="2" fill="#79d3fa"/><rect x="6" y="5.2" width="4" height="2" fill="#79d3fa"/><rect x="13" y="5.2" width="5" height="2" fill="#c9f7f5"/><rect x="20" y="5.2" width="2" height="2" fill="#c9f7f5"/><rect x="27" y="5.2" width="3" height="2" fill="#78f698"/><rect x="34" y="5.2" width="4" height="2" fill="#e9f5fc"/><rect x="4" y="5.2" width="5" height="2" fill="#fff48f"/><rect x="11" y="5.2" width="2" height="2" fill="#c9f7f5"/><rect x="18" y="5.2" width="3" height="2" fill="#c9f7f5"/><rect x="25" y="5.2" width="4" height="2" fill="#ff9f9d"/><rect x="9" y="7.8" width="5" height="2" fill="#ff9f9d"/><rect x="16" y="7.8" width="2" height="2" fill="#e9f5fc"/><rect x="23" y="7.8" width="3" height="2" fill="#dff8f6"/><rect x="30" y="7.8" width="4" height="2" fill="#79d3fa"/><rect x="0" y="7.8" width="5" height="2" fill="#c9f7f5"/><rect x="7" y="7.8" width="2" height="2" fill="#c9f7f5"/><rect x="14" y="7.8" width="3" height="2" fill="#78f698"/><rect x="21" y="7.8" width="4" height="2" fill="#e9f5fc"/><rect x="28" y="7.8" width="5" height="2" fill="#fff48f"/><rect x="12" y="10.4" width="2" height="2" fill="#fff48f"/><rect x="19" y="10.4" width="3" height="2" fill="#c9f7f5"/><rect x="26" y="10.4" width="4" height="2" fill="#c9f7f5"/><rect x="33" y="10.4" width="5" height="2" fill="#ff9f9d"/><rect x="3" y="10.4" width="2" height="2" fill="#e9f5fc"/><rect x="10" y="10.4" width="3" height="2" fill="#dff8f6"/><rect x="17" y="10.4" width="4" height="2" fill="#79d3fa"/><rect x="24" y="10.4" width="5" height="2" fill="#c9f7f5"/><rect x="31" y="10.4" width="2" height="2" fill="#c9f7f5"/><rect x="15" y="13.0" width="3" height="2" fill="#c9f7f5"/><rect x="22" y="13.0" width="4" height="2" fill="#78f698"/><rect x="29" y="13.0" width="5" height="2" fill="#e9f5fc"/><rect x="36" y="13.0" width="2" height="2" fill="#fff48f"/><rect x="6" y="13.0" width="3" height="2" fill="#c9f7f5"/><rect x="13" y="13.0" width="4" height="2" fill="#c9f7f5"/><rect x="20" y="13.0" width="5" height="2" fill="#ff9f9d"/><rect x="27" y="13.0" width="2" height="2" fill="#e9f5fc"/><rect x="34" y="13.0" width="3" height="2" fill="#dff8f6"/><rect x="18" y="15.6" width="4" height="2" fill="#dff8f6"/><rect x="25" y="15.6" width="5" height="2" fill="#79d3fa"/><rect x="32" y="15.6" width="2" height="2" fill="#c9f7f5"/><rect x="2" y="15.6" width="3" height="2" fill="#c9f7f5"/><rect x="9" y="15.6" width="4" height="2" fill="#78f698"/><rect x="16" y="15.6" width="5" height="2" fill="#e9f5fc"/><rect x="23" y="15.6" width="2" height="2" fill="#fff48f"/><rect x="30" y="15.6" width="3" height="2" fill="#c9f7f5"/><rect x="0" y="15.6" width="4" height="2" fill="#c9f7f5"/><rect x="21" y="18.2" width="5" height="2" fill="#c9f7f5"/><rect x="28" y="18.2" width="2" height="2" fill="#ff9f9d"/><rect x="35" y="18.2" width="3" height="2" fill="#e9f5fc"/><rect x="5" y="18.2" width="4" height="2" fill="#dff8f6"/><rect x="12" y="18.2" width="5" height="2" fill="#79d3fa"/><rect x="19" y="18.2" width="2" height="2" fill="#c9f7f5"/><rect x="26" y="18.2" width="3" height="2" fill="#c9f7f5"/><rect x="33" y="18.2" width="4" height="2" fill="#78f698"/><rect x="3" y="18.2" width="5" height="2" fill="#e9f5fc"/><rect x="24" y="20.8" width="2" height="2" fill="#e9f5fc"/><rect x="31" y="20.8" width="3" height="2" fill="#fff48f"/><rect x="1" y="20.8" width="4" height="2" fill="#c9f7f5"/><rect x="8" y="20.8" width="5" height="2" fill="#c9f7f5"/><rect x="15" y="20.8" width="2" height="2" fill="#ff9f9d"/><rect x="22" y="20.8" width="3" height="2" fill="#e9f5fc"/><rect x="29" y="20.8" width="4" height="2" fill="#dff8f6"/><rect x="36" y="20.8" width="5" height="2" fill="#79d3fa"/><rect x="6" y="20.8" width="2" height="2" fill="#c9f7f5"/><rect x="27" y="23.4" width="3" height="2" fill="#c9f7f5"/><rect x="34" y="23.4" width="4" height="2" fill="#c9f7f5"/><rect x="4" y="23.4" width="5" height="2" fill="#78f698"/><rect x="11" y="23.4" width="2" height="2" fill="#e9f5fc"/><rect x="18" y="23.4" width="3" height="2" fill="#fff48f"/><rect x="25" y="23.4" width="4" height="2" fill="#c9f7f5"/><rect x="32" y="23.4" width="5" height="2" fill="#c9f7f5"/><rect x="2" y="23.4" width="2" height="2" fill="#ff9f9d"/><rect x="9" y="23.4" width="3" height="2" fill="#e9f5fc"/><rect x="30" y="26.0" width="4" height="2" fill="#e9f5fc"/><rect x="0" y="26.0" width="5" height="2" fill="#dff8f6"/><rect x="7" y="26.0" width="2" height="2" fill="#79d3fa"/><rect x="14" y="26.0" width="3" height="2" fill="#c9f7f5"/><rect x="21" y="26.0" width="4" height="2" fill="#c9f7f5"/><rect x="28" y="26.0" width="5" height="2" fill="#78f698"/><rect x="35" y="26.0" width="2" height="2" fill="#e9f5fc"/><rect x="5" y="26.0" width="3" height="2" fill="#fff48f"/><rect x="12" y="26.0" width="4" height="2" fill="#c9f7f5"/><rect x="33" y="28.6" width="5" height="2" fill="#c9f7f5"/><rect x="3" y="28.6" width="2" height="2" fill="#c9f7f5"/><rect x="10" y="28.6" width="3" height="2" fill="#ff9f9d"/><rect x="17" y="28.6" width="4" height="2" fill="#e9f5fc"/><rect x="24" y="28.6" width="5" height="2" fill="#dff8f6"/><rect x="31" y="28.6" width="2" height="2" fill="#79d3fa"/><rect x="1" y="28.6" width="3" height="2" fill="#c9f7f5"/><rect x="8" y="28.6" width="4" height="2" fill="#c9f7f5"/><rect x="15" y="28.6" width="5" height="2" fill="#78f698"/><rect x="36" y="31.2" width="2" height="2" fill="#78f698"/><rect x="6" y="31.2" width="3" height="2" fill="#e9f5fc"/><rect x="13" y="31.2" width="4" height="2" fill="#fff48f"/><rect x="20" y="31.2" width="5" height="2" fill="#c9f7f5"/><rect x="27" y="31.2" width="2" height="2" fill="#c9f7f5"/><rect x="34" y="31.2" width="3" height="2" fill="#ff9f9d"/><rect x="4" y="31.2" width="4" height="2" fill="#e9f5fc"/><rect x="11" y="31.2" width="5" height="2" fill="#dff8f6"/><rect x="18" y="31.2" width="2" height="2" fill="#79d3fa"/><rect x="2" y="33.8" width="3" height="2" fill="#79d3fa"/><rect x="9" y="33.8" width="4" height="2" fill="#c9f7f5"/><rect x="16" y="33.8" width="5" height="2" fill="#c9f7f5"/><rect x="23" y="33.8" width="2" height="2" fill="#78f698"/><rect x="30" y="33.8" width="3" height="2" fill="#e9f5fc"/><rect x="0" y="33.8" width="4" height="2" fill="#fff48f"/><rect x="7" y="33.8" width="5" height="2" fill="#c9f7f5"/><rect x="14" y="33.8" width="2" height="2" fill="#c9f7f5"/><rect x="21" y="33.8" width="3" height="2" fill="#ff9f9d"/><rect x="5" y="36.4" width="4" height="2" fill="#ff9f9d"/><rect x="12" y="36.4" width="5" height="2" fill="#e9f5fc"/><rect x="19" y="36.4" width="2" height="2" fill="#dff8f6"/><rect x="26" y="36.4" width="3" height="2" fill="#79d3fa"/><rect x="33" y="36.4" width="4" height="2" fill="#c9f7f5"/><rect x="3" y="36.4" width="5" height="2" fill="#c9f7f5"/><rect x="10" y="36.4" width="2" height="2" fill="#78f698"/><rect x="17" y="36.4" width="3" height="2" fill="#e9f5fc"/><rect x="24" y="36.4" width="4" height="2" fill="#fff48f"/></svg>
<div class="t" style="left:80px;top:720.5px;font-size:18.3px;color:#e4e4ee;">AgesPortal.png</div>
<div class="t" style="left:80px;top:746.5px;font-size:15.6px;color:#7d8290;">2048 x 2048px (256x)</div>
<svg style="left:409.2px;top:727.2px" width="27.6" height="27.6" viewBox="0 0 24 24"><path d="M12 2C6.48 2 2 6.48 2 12s4.48 10 10 10 10-4.48 10-10S17.52 2 12 2zm-2 15l-5-5 1.41-1.41L10 14.17l7.59-7.59L19 8l-9 9z" fill="#8c909c" /></svg>
<svg style="left:448.5px;top:716px" width="10" height="6" viewBox="0 0 10 6"><path d="M0 6H10L5 0Z" fill="#2b303a"/></svg>
<svg style="left:448.5px;top:1031px" width="10" height="6" viewBox="0 0 10 6"><path d="M0 0H10L5 6Z" fill="#2b303a"/></svg>
<div class="a" style="left:1484px;top:133.3px;width:130px;height:35px;background:rgba(21,23,28,.9);border-radius:4px"></div>
<svg style="left:1494px;top:141px" width="21" height="21" viewBox="0 0 21 21"><rect x="0" y="0" width="21" height="21" rx="2.600" fill="#d3d3de"/><path d="M4 16.500L7.500 12L9.700 14.800L13 10.500L17.500 16.500Z" fill="#15181c"/></svg>
<svg style="left:1518px;top:150px" width="8" height="5" viewBox="0 0 8 5"><path d="M0.500 0.500L4 4L7.500 0.500" fill="none" stroke="#8e919d" stroke-width="1.400"/></svg>
<svg style="left:1537px;top:141px" width="22" height="21" viewBox="0 0 22 21"><path d="M5.500 0V21M16.500 0V21" stroke="#d3d3de" stroke-width="2.400"/><path d="M0.500 14.500H10.500M11.500 5.500H21.500" stroke="#d3d3de" stroke-width="2.600"/></svg>
<svg style="left:1580px;top:144px" width="22" height="15" viewBox="0 0 22 15"><path d="M0 1.500H22M0 7.500H22M0 13.500H22" stroke="#d3d3de" stroke-width="2.700"/></svg>
<svg style="left:1515px;top:909px" width="100" height="100" viewBox="0 0 100 100"><path d="M50 15V50" stroke="#23a13a" stroke-width="2.400"/><path d="M15 50H50" stroke="#a52a3c" stroke-width="2.400"/><circle cx="50" cy="85" r="10" fill="#1f7f31"/><circle cx="85" cy="50" r="10" fill="#88222f"/><circle cx="50" cy="15" r="10" fill="#23a83c"/><circle cx="15" cy="50" r="10" fill="#ab293b"/><circle cx="50" cy="50" r="11.700" fill="#25469f"/><text x="50" y="20.300" text-anchor="middle" font-family='Liberation Sans' font-size="14.500" fill="#0c0e12">Y</text><text x="15" y="55.200" text-anchor="middle" font-family='Liberation Sans' font-size="14.500" fill="#0c0e12">X</text></svg>
<svg style="left:460.5px;top:1006px" width="28" height="28" viewBox="0 0 24 24"><path d="M15.41 7.41L14 6l-6 6 6 6 1.41-1.41L10.83 12z" fill="#e6e6ee" /></svg>
<svg style="left:496px;top:1011px" width="27" height="25" viewBox="0 0 27 25"><path d="M7.100 3.300A5.850 2.400 0 0 1 18.800 3.300V13.800A5.850 2.400 0 0 1 7.100 13.800Z" fill="#d3d3de"/><ellipse cx="12.950" cy="3.700" rx="3.200" ry="0.950" fill="#15181d"/><path d="M18.800 5H20.300A3.200 3.200 0 0 1 20.300 11.400H18.800" fill="none" stroke="#d3d3de" stroke-width="1.700"/><path d="M0.200 18L7.400 15.300A5.850 2.400 0 0 0 18.500 15.300L26.100 18L13.100 24.100Z" fill="#d3d3de"/></svg>
<div class="t" style="left:537px;top:1016px;font-size:18px;color:#dedee8;">AgesPortal2.0</div>
<div class="t" style="left:1525px;top:1017px;font-size:16.4px;color:#dedee8;">60 FPS</div>
<svg style="left:1586.5px;top:1005.5px" width="28" height="28" viewBox="0 0 24 24"><path d="M10 6L8.59 7.41 13.17 12l-4.58 4.59L10 18l6-6z" fill="#e6e6ee" /></svg>
<div class="a" style="left:1615px;top:130px;width:305px;height:50px;background:#191c22;"></div>
<div class="a" style="left:1615px;top:133px;width:86px;height:47px;background:#1d2128;border-radius:6px 6px 0 0"></div>
<div class="t cj" style="left:1627.5px;top:146px;font-size:21px;color:#7d8290;">颜色</div>
<svg style="left:1683px;top:147px" width="6" height="20" viewBox="0 0 6 20"><circle cx="3" cy="3.75" r="2.05" fill="#7d8290"/><circle cx="3" cy="10.0" r="2.05" fill="#7d8290"/><circle cx="3" cy="16.25" r="2.05" fill="#7d8290"/></svg>
<div class="t" style="left:1714px;top:148px;font-size:17.2px;color:#7d8290;">PALETTE</div>
<svg style="left:1895.2px;top:149.8px" width="13.8" height="8.4" viewBox="0 0 13.8 8.4"><path d="M1.200 1.200L6.9 7.0L12.600000000000001 1.200" fill="none" stroke="#a9acb8" stroke-width="2.6"/></svg>
<div class="a" style="left:1647px;top:208px;width:39px;height:34px;background:#000000;border-radius:5px"></div>
<div class="a" style="left:1624.5px;top:188px;width:42.5px;height:37px;background:#ffffff;border:2.2px solid #3e90ff;border-radius:5px"></div>
<svg style="left:1669px;top:185px" width="22" height="22" viewBox="0 0 24 24"><path d="M16 17.01V10h-2v7.01h-3L15 21l4-3.99h-3zM9 3L5 6.99h3V14h2V6.99h3L9 3z" fill="#c8c8d4" /></svg>
<div class="a" style="left:1695px;top:185px;width:166px;height:34px;background:#181b20;"></div>
<div class="t" style="left:1704px;top:193.8px;font-size:18.6px;color:#e4e4ee;font-family:'Liberation Mono',monospace">#ffffff</div>
<div class="a" style="left:1695px;top:219px;width:22.5px;height:21px;background:#6c8786;"></div>
<div class="a" style="left:1717px;top:219px;width:23.5px;height:21px;background:#8eb5b3;"></div>
<div class="a" style="left:1740px;top:219px;width:22.5px;height:21px;background:#44615f;"></div>
<div class="a" style="left:1762px;top:219px;width:23.5px;height:21px;background:#c9f7f5;"></div>
<div class="a" style="left:1785px;top:219px;width:22.5px;height:21px;background:#563522;"></div>
<div class="a" style="left:1807px;top:219px;width:23.5px;height:21px;background:#9d9d9d;"></div>
<div class="a" style="left:1830px;top:219px;width:21.5px;height:21px;background:#e1f6f4;"></div>
<div class="a" style="left:1851px;top:219px;width:10.5px;height:21px;background:#dbfcfb;"></div>
<svg style="left:1870.5px;top:189.5px" width="28" height="28" viewBox="0 0 24 24"><path d="M19.14 12.94c.04-.3.06-.61.06-.94 0-.32-.02-.64-.07-.94l2.03-1.58c.18-.14.23-.41.12-.61l-1.92-3.32c-.12-.22-.37-.29-.59-.22l-2.39.96c-.5-.38-1.03-.7-1.62-.94l-.36-2.54c-.04-.24-.24-.41-.48-.41h-3.84c-.24 0-.43.17-.47.41l-.36 2.54c-.59.24-1.13.57-1.62.94l-2.39-.96c-.22-.08-.47 0-.59.22L2.74 8.87c-.12.21-.08.47.12.61l2.03 1.58c-.05.3-.09.63-.09.94s.02.64.07.94l-2.03 1.58c-.18.14-.23.41-.12.61l1.92 3.32c.12.22.37.29.59.22l2.39-.96c.5.38 1.03.7 1.62.94l.36 2.54c.05.24.24.41.48.41h3.84c.24 0 .44-.17.47-.41l.36-2.54c.59-.24 1.13-.56 1.62-.94l2.39.96c.22.08.47 0 .59-.22l1.92-3.32c.12-.22.07-.47-.12-.61l-2.01-1.58zM12 15.6c-1.98 0-3.6-1.62-3.6-3.6s1.62-3.6 3.6-3.6 3.6 1.62 3.6 3.6-1.62 3.6-3.6 3.6z" fill="#c8c8d4" /></svg>
<div class="a" style="left:1622px;top:253px;width:249px;height:224.5px;background:linear-gradient(to top,#000,rgba(0,0,0,0)),linear-gradient(to right,#fff,#f00)"></div>
<div class="a" style="left:1881px;top:253px;width:30px;height:224.5px;background:linear-gradient(to bottom,#f00 0%,#ff0 16.66%,#0f0 33.33%,#0ff 50%,#00f 66.66%,#f0f 83.33%,#f00 100%)"></div>
<svg style="left:1616.5px;top:247.5px" width="11" height="11" viewBox="0 0 11 11"><circle cx="5.500" cy="5.500" r="5" fill="#f4f3ff"/></svg>
<svg style="left:1876px;top:245px" width="39" height="18" viewBox="0 0 39 18"><path d="M1 0.500V17L9.500 8.500Z M38 0.500V17L29.500 8.500Z" fill="#f4f3ff"/></svg>
<div class="a" style="left:1616.5px;top:485.5px;width:89.5px;height:35px;background:#272b34;border-radius:4px"></div>
<div class="a" style="left:1708.5px;top:485.5px;width:89.5px;height:35px;background:#272b34;border-radius:4px"></div>
<div class="a" style="left:1800.5px;top:485.5px;width:90.5px;height:35px;background:#272b34;border-radius:4px"></div>
<div class="a" style="left:1800.5px;top:516.5px;width:90.5px;height:4px;background:#3e90ff;border-radius:0 0 4px 4px"></div>
<div class="t" style="left:1657.5px;top:496px;font-size:17px;color:#d3d3de;">0</div>
<div class="t" style="left:1749.5px;top:496px;font-size:17px;color:#d3d3de;">0</div>
<div class="t" style="left:1833.5px;top:496px;font-size:17px;color:#d3d3de;">100</div>
<svg style="left:1905px;top:492px" width="6" height="20" viewBox="0 0 6 20"><circle cx="3" cy="3.75" r="2.05" fill="#7d8290"/><circle cx="3" cy="10.0" r="2.05" fill="#7d8290"/><circle cx="3" cy="16.25" r="2.05" fill="#7d8290"/></svg>
<svg style="left:1630px;top:532px" width="17" height="17" viewBox="0 0 17 17"><path d="M8.500 0V17M0 8.500H17" stroke="#e6e6ee" stroke-width="2.300"/></svg>
<svg style="left:1673px;top:528px" width="25.5" height="25.5" viewBox="0 0 24 24"><path d="M20.71 5.63l-2.34-2.34c-.39-.39-1.02-.39-1.41 0l-3.12 3.12-1.93-1.91-1.41 1.41 1.42 1.42L3 16.25V21h4.75l8.92-8.92 1.42 1.42 1.41-1.41-1.92-1.92 3.12-3.12c.4-.4.4-1.03.01-1.42zM6.92 19L5 17.08l8.06-8.06 1.92 1.92L6.92 19z" fill="#e6e6ee" /></svg>
<div class="t cj" style="left:1628px;top:574.5px;font-size:21.2px;color:#7d8290;">大纲</div>
<svg style="left:1683px;top:576px" width="6" height="20" viewBox="0 0 6 20"><circle cx="3" cy="3.75" r="2.05" fill="#7d8290"/><circle cx="3" cy="10.0" r="2.05" fill="#7d8290"/><circle cx="3" cy="16.25" r="2.05" fill="#7d8290"/></svg>
<svg style="left:1895.2px;top:579.3px" width="13.8" height="8.4" viewBox="0 0 13.8 8.4"><path d="M1.200 1.200L6.9 7.0L12.600000000000001 1.200" fill="none" stroke="#a9acb8" stroke-width="2.6"/></svg>
<div class="a" style="left:1616px;top:609px;width:45px;height:38px;background:#3e90ff;border-radius:5px"></div>
<svg style="left:1628px;top:617px" width="21" height="22" viewBox="0 0 21 22"><rect x="0" y="0" width="21" height="10" rx="1.300" fill="#0c0e12"/><rect x="0" y="12" width="21" height="10" rx="1.300" fill="#0c0e12"/><circle cx="5.800" cy="5" r="1.500" fill="#3e90ff"/><circle cx="5.800" cy="17" r="1.500" fill="#3e90ff"/></svg>
<svg style="left:1799.5px;top:613.5px" width="29" height="29" viewBox="0 0 24 24"><path d="M15.5 14h-.79l-.28-.27C15.41 12.59 16 11.11 16 9.5 16 5.91 13.09 3 9.5 3S3 5.91 3 9.5 5.91 16 9.5 16c1.61 0 3.09-.59 4.23-1.57l.27.28v.79l5 4.99L20.49 19l-4.99-5zm-6 0C7.01 14 5 11.99 5 9.5S7.01 5 9.5 5 14 7.01 14 9.5 11.99 14 9.5 14z" fill="#e6e6ee" /></svg>
<div class="t" style="left:1843px;top:619.5px;font-size:17.4px;color:#d3d3de;">1 / 131</div>
<svg style="left:1905px;top:618px" width="6" height="20" viewBox="0 0 6 20"><circle cx="3" cy="3.75" r="2.05" fill="#7d8290"/><circle cx="3" cy="10.0" r="2.05" fill="#7d8290"/><circle cx="3" cy="16.25" r="2.05" fill="#7d8290"/></svg>
<div class="a" style="left:1615px;top:647px;width:305px;height:395px;background:#181b20;"></div>
<svg style="left:1701.6px;top:647.4px" width="22" height="20.6" viewBox="0 0 22 20.600"><path d="M11 0.800L20.300 5.200V15.300L11 19.800L1.700 15.300V5.200Z" fill="#d3d3de" stroke="#d3d3de" stroke-width="1.400" stroke-linejoin="round"/><path d="M11 3.300L16.900 6L11 8.700L5.100 6Z M13.300 11.400L18 9.200V14.300L13.300 16.600Z" fill="#181b20"/></svg>
<div class="t" style="left:1731px;top:648.1999999999999px;font-size:18px;color:#dedee8;">cube</div>
<svg style="left:1778.5px;top:645.9px" width="23" height="23" viewBox="0 0 24 24"><path d="M14.59 8L12 10.59 9.41 8 8 9.41 10.59 12 8 14.59 9.41 16 12 13.41 14.59 16 16 14.59 13.41 12 16 9.41 14.59 8zM12 2C6.47 2 2 6.47 2 12s4.47 10 10 10 10-4.47 10-10S17.53 2 12 2zm0 18c-4.41 0-8-3.59-8-8s3.59-8 8-8 8 3.59 8 8-3.59 8-8 8z" fill="#7d8290" /></svg>
<svg style="left:1806px;top:646.4px" width="20" height="21" viewBox="0 0 20 21"><path d="M9.500 0.500V20H0.800Z" fill="none" stroke="#7d8290" stroke-width="1.500"/><path d="M11 0.500V20.500H19.500Z" fill="#7d8290"/></svg>
<svg style="left:1827.5px;top:645.4px" width="24" height="24" viewBox="0 0 24 24"><path d="M19 3H5c-1.1 0-2 .9-2 2v14c0 1.1.9 2 2 2h14c1.1 0 2-.9 2-2V5c0-1.1-.9-2-2-2zm0 16H5V5h14v14zM17.99 9l-1.41-1.42-6.59 6.59-2.58-2.57-1.42 1.41 4 3.99z" fill="#dedee8" /></svg>
<svg style="left:1853.8px;top:647.0px" width="22" height="21" viewBox="0 0 22 21"><rect x="0" y="8.300" width="17.500" height="11.600" rx="1.800" fill="#80848f"/><path d="M12.700 8.500V5.600a4.250 4.250 0 0 1 8.500 0V7.300" fill="none" stroke="#80848f" stroke-width="2.200"/></svg>
<svg style="left:1878.2px;top:643.8px" width="24" height="24" viewBox="0 0 24 24"><path d="M12 4.5C7 4.5 2.73 7.61 1 12c1.73 4.39 6 7.5 11 7.5s9.27-3.11 11-7.5c-1.73-4.39-6-7.5-11-7.5zM12 17c-2.76 0-5-2.24-5-5s2.24-5 5-5 5 2.24 5 5-2.24 5-5 5zm0-8c-1.66 0-3 1.34-3 3s1.34 3 3 3 3-1.34 3-3-1.34-3-3-3z" fill="#dedee8" /></svg>
<svg style="left:1701.6px;top:682.5px" width="22" height="20.6" viewBox="0 0 22 20.600"><path d="M11 0.800L20.300 5.200V15.300L11 19.800L1.700 15.300V5.200Z" fill="#d3d3de" stroke="#d3d3de" stroke-width="1.400" stroke-linejoin="round"/><path d="M11 3.300L16.900 6L11 8.700L5.100 6Z M13.300 11.400L18 9.200V14.300L13.300 16.600Z" fill="#181b20"/></svg>
<div class="t" style="left:1731px;top:683.3px;font-size:18px;color:#dedee8;">cube</div>
<svg style="left:1778.5px;top:681.0px" width="23" height="23" viewBox="0 0 24 24"><path d="M14.59 8L12 10.59 9.41 8 8 9.41 10.59 12 8 14.59 9.41 16 12 13.41 14.59 16 16 14.59 13.41 12 16 9.41 14.59 8zM12 2C6.47 2 2 6.47 2 12s4.47 10 10 10 10-4.47 10-10S17.53 2 12 2zm0 18c-4.41 0-8-3.59-8-8s3.59-8 8-8 8 3.59 8 8-3.59 8-8 8z" fill="#7d8290" /></svg>
<svg style="left:1806px;top:681.5px" width="20" height="21" viewBox="0 0 20 21"><path d="M9.500 0.500V20H0.800Z" fill="none" stroke="#7d8290" stroke-width="1.500"/><path d="M11 0.500V20.500H19.500Z" fill="#7d8290"/></svg>
<svg style="left:1827.5px;top:680.5px" width="24" height="24" viewBox="0 0 24 24"><path d="M19 3H5c-1.1 0-2 .9-2 2v14c0 1.1.9 2 2 2h14c1.1 0 2-.9 2-2V5c0-1.1-.9-2-2-2zm0 16H5V5h14v14zM17.99 9l-1.41-1.42-6.59 6.59-2.58-2.57-1.42 1.41 4 3.99z" fill="#dedee8" /></svg>
<svg style="left:1853.8px;top:682.1px" width="22" height="21" viewBox="0 0 22 21"><rect x="0" y="8.300" width="17.500" height="11.600" rx="1.800" fill="#80848f"/><path d="M12.700 8.500V5.600a4.250 4.250 0 0 1 8.500 0V7.300" fill="none" stroke="#80848f" stroke-width="2.200"/></svg>
<svg style="left:1878.2px;top:678.9px" width="24" height="24" viewBox="0 0 24 24"><path d="M12 4.5C7 4.5 2.73 7.61 1 12c1.73 4.39 6 7.5 11 7.5s9.27-3.11 11-7.5c-1.73-4.39-6-7.5-11-7.5zM12 17c-2.76 0-5-2.24-5-5s2.24-5 5-5 5 2.24 5 5-2.24 5-5 5zm0-8c-1.66 0-3 1.34-3 3s1.34 3 3 3 3-1.34 3-3-1.34-3-3-3z" fill="#dedee8" /></svg>
<svg style="left:1701.6px;top:717.7px" width="22" height="20.6" viewBox="0 0 22 20.600"><path d="M11 0.800L20.300 5.200V15.300L11 19.800L1.700 15.300V5.200Z" fill="#d3d3de" stroke="#d3d3de" stroke-width="1.400" stroke-linejoin="round"/><path d="M11 3.300L16.900 6L11 8.700L5.100 6Z M13.300 11.400L18 9.200V14.300L13.300 16.600Z" fill="#181b20"/></svg>
<div class="t" style="left:1731px;top:718.5px;font-size:18px;color:#dedee8;">cube</div>
<svg style="left:1778.5px;top:716.2px" width="23" height="23" viewBox="0 0 24 24"><path d="M14.59 8L12 10.59 9.41 8 8 9.41 10.59 12 8 14.59 9.41 16 12 13.41 14.59 16 16 14.59 13.41 12 16 9.41 14.59 8zM12 2C6.47 2 2 6.47 2 12s4.47 10 10 10 10-4.47 10-10S17.53 2 12 2zm0 18c-4.41 0-8-3.59-8-8s3.59-8 8-8 8 3.59 8 8-3.59 8-8 8z" fill="#7d8290" /></svg>
<svg style="left:1806px;top:716.7px" width="20" height="21" viewBox="0 0 20 21"><path d="M9.500 0.500V20H0.800Z" fill="none" stroke="#7d8290" stroke-width="1.500"/><path d="M11 0.500V20.500H19.500Z" fill="#7d8290"/></svg>
<svg style="left:1827.5px;top:715.7px" width="24" height="24" viewBox="0 0 24 24"><path d="M19 3H5c-1.1 0-2 .9-2 2v14c0 1.1.9 2 2 2h14c1.1 0 2-.9 2-2V5c0-1.1-.9-2-2-2zm0 16H5V5h14v14zM17.99 9l-1.41-1.42-6.59 6.59-2.58-2.57-1.42 1.41 4 3.99z" fill="#dedee8" /></svg>
<svg style="left:1853.8px;top:717.3000000000001px" width="22" height="21" viewBox="0 0 22 21"><rect x="0" y="8.300" width="17.500" height="11.600" rx="1.800" fill="#80848f"/><path d="M12.700 8.500V5.600a4.250 4.250 0 0 1 8.500 0V7.300" fill="none" stroke="#80848f" stroke-width="2.200"/></svg>
<svg style="left:1878.2px;top:714.1px" width="24" height="24" viewBox="0 0 24 24"><path d="M12 4.5C7 4.5 2.73 7.61 1 12c1.73 4.39 6 7.5 11 7.5s9.27-3.11 11-7.5c-1.73-4.39-6-7.5-11-7.5zM12 17c-2.76 0-5-2.24-5-5s2.24-5 5-5 5 2.24 5 5-2.24 5-5 5zm0-8c-1.66 0-3 1.34-3 3s1.34 3 3 3 3-1.34 3-3-1.34-3-3-3z" fill="#dedee8" /></svg>
<svg style="left:1701.6px;top:752.8px" width="22" height="20.6" viewBox="0 0 22 20.600"><path d="M11 0.800L20.300 5.200V15.300L11 19.800L1.700 15.300V5.200Z" fill="#d3d3de" stroke="#d3d3de" stroke-width="1.400" stroke-linejoin="round"/><path d="M11 3.300L16.900 6L11 8.700L5.100 6Z M13.300 11.400L18 9.200V14.300L13.300 16.600Z" fill="#181b20"/></svg>
<div class="t" style="left:1731px;top:753.5999999999999px;font-size:18px;color:#dedee8;">cube</div>
<svg style="left:1778.5px;top:751.3px" width="23" height="23" viewBox="0 0 24 24"><path d="M14.59 8L12 10.59 9.41 8 8 9.41 10.59 12 8 14.59 9.41 16 12 13.41 14.59 16 16 14.59 13.41 12 16 9.41 14.59 8zM12 2C6.47 2 2 6.47 2 12s4.47 10 10 10 10-4.47 10-10S17.53 2 12 2zm0 18c-4.41 0-8-3.59-8-8s3.59-8 8-8 8 3.59 8 8-3.59 8-8 8z" fill="#7d8290" /></svg>
<svg style="left:1806px;top:751.8px" width="20" height="21" viewBox="0 0 20 21"><path d="M9.500 0.500V20H0.800Z" fill="none" stroke="#7d8290" stroke-width="1.500"/><path d="M11 0.500V20.500H19.500Z" fill="#7d8290"/></svg>
<svg style="left:1827.5px;top:750.8px" width="24" height="24" viewBox="0 0 24 24"><path d="M19 3H5c-1.1 0-2 .9-2 2v14c0 1.1.9 2 2 2h14c1.1 0 2-.9 2-2V5c0-1.1-.9-2-2-2zm0 16H5V5h14v14zM17.99 9l-1.41-1.42-6.59 6.59-2.58-2.57-1.42 1.41 4 3.99z" fill="#dedee8" /></svg>
<svg style="left:1853.8px;top:752.4px" width="22" height="21" viewBox="0 0 22 21"><rect x="0" y="8.300" width="17.500" height="11.600" rx="1.800" fill="#80848f"/><path d="M12.700 8.500V5.600a4.250 4.250 0 0 1 8.500 0V7.300" fill="none" stroke="#80848f" stroke-width="2.200"/></svg>
<svg style="left:1878.2px;top:749.1999999999999px" width="24" height="24" viewBox="0 0 24 24"><path d="M12 4.5C7 4.5 2.73 7.61 1 12c1.73 4.39 6 7.5 11 7.5s9.27-3.11 11-7.5c-1.73-4.39-6-7.5-11-7.5zM12 17c-2.76 0-5-2.24-5-5s2.24-5 5-5 5 2.24 5 5-2.24 5-5 5zm0-8c-1.66 0-3 1.34-3 3s1.34 3 3 3 3-1.34 3-3-1.34-3-3-3z" fill="#dedee8" /></svg>
<svg style="left:1701.6px;top:788px" width="22" height="20.6" viewBox="0 0 22 20.600"><path d="M11 0.800L20.300 5.200V15.300L11 19.800L1.700 15.300V5.200Z" fill="#d3d3de" stroke="#d3d3de" stroke-width="1.400" stroke-linejoin="round"/><path d="M11 3.300L16.900 6L11 8.700L5.100 6Z M13.300 11.400L18 9.200V14.300L13.300 16.600Z" fill="#181b20"/></svg>
<div class="t" style="left:1731px;top:788.8px;font-size:18px;color:#dedee8;">cube</div>
<svg style="left:1778.5px;top:786.5px" width="23" height="23" viewBox="0 0 24 24"><path d="M14.59 8L12 10.59 9.41 8 8 9.41 10.59 12 8 14.59 9.41 16 12 13.41 14.59 16 16 14.59 13.41 12 16 9.41 14.59 8zM12 2C6.47 2 2 6.47 2 12s4.47 10 10 10 10-4.47 10-10S17.53 2 12 2zm0 18c-4.41 0-8-3.59-8-8s3.59-8 8-8 8 3.59 8 8-3.59 8-8 8z" fill="#7d8290" /></svg>
<svg style="left:1806px;top:787px" width="20" height="21" viewBox="0 0 20 21"><path d="M9.500 0.500V20H0.800Z" fill="none" stroke="#7d8290" stroke-width="1.500"/><path d="M11 0.500V20.500H19.500Z" fill="#7d8290"/></svg>
<svg style="left:1827.5px;top:786px" width="24" height="24" viewBox="0 0 24 24"><path d="M19 3H5c-1.1 0-2 .9-2 2v14c0 1.1.9 2 2 2h14c1.1 0 2-.9 2-2V5c0-1.1-.9-2-2-2zm0 16H5V5h14v14zM17.99 9l-1.41-1.42-6.59 6.59-2.58-2.57-1.42 1.41 4 3.99z" fill="#dedee8" /></svg>
<svg style="left:1853.8px;top:787.6px" width="22" height="21" viewBox="0 0 22 21"><rect x="0" y="8.300" width="17.500" height="11.600" rx="1.800" fill="#80848f"/><path d="M12.700 8.500V5.600a4.250 4.250 0 0 1 8.500 0V7.300" fill="none" stroke="#80848f" stroke-width="2.200"/></svg>
<svg style="left:1878.2px;top:784.4px" width="24" height="24" viewBox="0 0 24 24"><path d="M12 4.5C7 4.5 2.73 7.61 1 12c1.73 4.39 6 7.5 11 7.5s9.27-3.11 11-7.5c-1.73-4.39-6-7.5-11-7.5zM12 17c-2.76 0-5-2.24-5-5s2.24-5 5-5 5 2.24 5 5-2.24 5-5 5zm0-8c-1.66 0-3 1.34-3 3s1.34 3 3 3 3-1.34 3-3-1.34-3-3-3z" fill="#dedee8" /></svg>
<svg style="left:1701.6px;top:823.1px" width="22" height="20.6" viewBox="0 0 22 20.600"><path d="M11 0.800L20.300 5.200V15.300L11 19.800L1.700 15.300V5.200Z" fill="#d3d3de" stroke="#d3d3de" stroke-width="1.400" stroke-linejoin="round"/><path d="M11 3.300L16.900 6L11 8.700L5.100 6Z M13.300 11.400L18 9.200V14.300L13.300 16.600Z" fill="#181b20"/></svg>
<div class="t" style="left:1731px;top:823.9px;font-size:18px;color:#dedee8;">cube</div>
<svg style="left:1853.8px;top:822.7px" width="22" height="21" viewBox="0 0 22 21"><rect x="0" y="8.300" width="17.500" height="11.600" rx="1.800" fill="#80848f"/><path d="M12.700 8.500V5.600a4.250 4.250 0 0 1 8.500 0V7.300" fill="none" stroke="#80848f" stroke-width="2.200"/></svg>
<svg style="left:1878.2px;top:819.5px" width="24" height="24" viewBox="0 0 24 24"><path d="M12 4.5C7 4.5 2.73 7.61 1 12c1.73 4.39 6 7.5 11 7.5s9.27-3.11 11-7.5c-1.73-4.39-6-7.5-11-7.5zM12 17c-2.76 0-5-2.24-5-5s2.24-5 5-5 5 2.24 5 5-2.24 5-5 5zm0-8c-1.66 0-3 1.34-3 3s1.34 3 3 3 3-1.34 3-3-1.34-3-3-3z" fill="#dedee8" /></svg>
<svg style="left:1701.6px;top:858.2px" width="22" height="20.6" viewBox="0 0 22 20.600"><path d="M11 0.800L20.300 5.200V15.300L11 19.800L1.700 15.300V5.200Z" fill="#d3d3de" stroke="#d3d3de" stroke-width="1.400" stroke-linejoin="round"/><path d="M11 3.300L16.900 6L11 8.700L5.100 6Z M13.300 11.400L18 9.200V14.300L13.300 16.600Z" fill="#181b20"/></svg>
<div class="t" style="left:1731px;top:859.0px;font-size:18px;color:#dedee8;">cube</div>
<svg style="left:1778.5px;top:856.7px" width="23" height="23" viewBox="0 0 24 24"><path d="M14.59 8L12 10.59 9.41 8 8 9.41 10.59 12 8 14.59 9.41 16 12 13.41 14.59 16 16 14.59 13.41 12 16 9.41 14.59 8zM12 2C6.47 2 2 6.47 2 12s4.47 10 10 10 10-4.47 10-10S17.53 2 12 2zm0 18c-4.41 0-8-3.59-8-8s3.59-8 8-8 8 3.59 8 8-3.59 8-8 8z" fill="#7d8290" /></svg>
<svg style="left:1806px;top:857.2px" width="20" height="21" viewBox="0 0 20 21"><path d="M9.500 0.500V20H0.800Z" fill="none" stroke="#7d8290" stroke-width="1.500"/><path d="M11 0.500V20.500H19.500Z" fill="#7d8290"/></svg>
<svg style="left:1827.5px;top:856.2px" width="24" height="24" viewBox="0 0 24 24"><path d="M19 3H5c-1.1 0-2 .9-2 2v14c0 1.1.9 2 2 2h14c1.1 0 2-.9 2-2V5c0-1.1-.9-2-2-2zm0 16H5V5h14v14zM17.99 9l-1.41-1.42-6.59 6.59-2.58-2.57-1.42 1.41 4 3.99z" fill="#dedee8" /></svg>
<svg style="left:1853.8px;top:857.8000000000001px" width="22" height="21" viewBox="0 0 22 21"><rect x="0" y="8.300" width="17.500" height="11.600" rx="1.800" fill="#80848f"/><path d="M12.700 8.500V5.600a4.250 4.250 0 0 1 8.500 0V7.300" fill="none" stroke="#80848f" stroke-width="2.200"/></svg>
<svg style="left:1878.2px;top:854.6px" width="24" height="24" viewBox="0 0 24 24"><path d="M12 4.5C7 4.5 2.73 7.61 1 12c1.73 4.39 6 7.5 11 7.5s9.27-3.11 11-7.5c-1.73-4.39-6-7.5-11-7.5zM12 17c-2.76 0-5-2.24-5-5s2.24-5 5-5 5 2.24 5 5-2.24 5-5 5zm0-8c-1.66 0-3 1.34-3 3s1.34 3 3 3 3-1.34 3-3-1.34-3-3-3z" fill="#dedee8" /></svg>
<svg style="left:1701.6px;top:893.3px" width="22" height="20.6" viewBox="0 0 22 20.600"><path d="M11 0.800L20.300 5.200V15.300L11 19.800L1.700 15.300V5.200Z" fill="#d3d3de" stroke="#d3d3de" stroke-width="1.400" stroke-linejoin="round"/><path d="M11 3.300L16.900 6L11 8.700L5.100 6Z M13.300 11.400L18 9.200V14.300L13.300 16.600Z" fill="#181b20"/></svg>
<div class="t" style="left:1731px;top:894.0999999999999px;font-size:18px;color:#dedee8;">cube</div>
<svg style="left:1778.5px;top:891.8px" width="23" height="23" viewBox="0 0 24 24"><path d="M14.59 8L12 10.59 9.41 8 8 9.41 10.59 12 8 14.59 9.41 16 12 13.41 14.59 16 16 14.59 13.41 12 16 9.41 14.59 8zM12 2C6.47 2 2 6.47 2 12s4.47 10 10 10 10-4.47 10-10S17.53 2 12 2zm0 18c-4.41 0-8-3.59-8-8s3.59-8 8-8 8 3.59 8 8-3.59 8-8 8z" fill="#7d8290" /></svg>
<svg style="left:1806px;top:892.3px" width="20" height="21" viewBox="0 0 20 21"><path d="M9.500 0.500V20H0.800Z" fill="none" stroke="#7d8290" stroke-width="1.500"/><path d="M11 0.500V20.500H19.500Z" fill="#7d8290"/></svg>
<svg style="left:1827.5px;top:891.3px" width="24" height="24" viewBox="0 0 24 24"><path d="M19 3H5c-1.1 0-2 .9-2 2v14c0 1.1.9 2 2 2h14c1.1 0 2-.9 2-2V5c0-1.1-.9-2-2-2zm0 16H5V5h14v14zM17.99 9l-1.41-1.42-6.59 6.59-2.58-2.57-1.42 1.41 4 3.99z" fill="#dedee8" /></svg>
<svg style="left:1853.8px;top:892.9px" width="22" height="21" viewBox="0 0 22 21"><rect x="0" y="8.300" width="17.500" height="11.600" rx="1.800" fill="#80848f"/><path d="M12.700 8.500V5.600a4.250 4.250 0 0 1 8.500 0V7.300" fill="none" stroke="#80848f" stroke-width="2.200"/></svg>
<svg style="left:1878.2px;top:889.6999999999999px" width="24" height="24" viewBox="0 0 24 24"><path d="M12 4.5C7 4.5 2.73 7.61 1 12c1.73 4.39 6 7.5 11 7.5s9.27-3.11 11-7.5c-1.73-4.39-6-7.5-11-7.5zM12 17c-2.76 0-5-2.24-5-5s2.24-5 5-5 5 2.24 5 5-2.24 5-5 5zm0-8c-1.66 0-3 1.34-3 3s1.34 3 3 3 3-1.34 3-3-1.34-3-3-3z" fill="#dedee8" /></svg>
<svg style="left:1659.5px;top:923.8px" width="26" height="26" viewBox="0 0 24 24"><path d="M10 4H4c-1.1 0-1.99.9-1.99 2L2 18c0 1.1.9 2 2 2h16c1.1 0 2-.9 2-2V8c0-1.1-.9-2-2-2h-8l-2-2z" fill="#d3d3de" /></svg>
<svg style="left:1639.7px;top:934.3px" width="15" height="9" viewBox="0 0 15 9"><path d="M1.200 1.200L7.500 7.400L13.800 1.200" fill="none" stroke="#8c909c" stroke-width="2.400"/></svg>
<div class="t" style="left:1692px;top:929.0999999999999px;font-size:18px;color:#dedee8;">B</div>
<svg style="left:1853.8px;top:927.9px" width="22" height="21" viewBox="0 0 22 21"><rect x="0" y="8.300" width="17.500" height="11.600" rx="1.800" fill="#80848f"/><path d="M12.700 8.500V5.600a4.250 4.250 0 0 1 8.500 0V7.300" fill="none" stroke="#80848f" stroke-width="2.200"/></svg>
<svg style="left:1878.2px;top:924.6999999999999px" width="24" height="24" viewBox="0 0 24 24"><path d="M12 4.5C7 4.5 2.73 7.61 1 12c1.73 4.39 6 7.5 11 7.5s9.27-3.11 11-7.5c-1.73-4.39-6-7.5-11-7.5zM12 17c-2.76 0-5-2.24-5-5s2.24-5 5-5 5 2.24 5 5-2.24 5-5 5zm0-8c-1.66 0-3 1.34-3 3s1.34 3 3 3 3-1.34 3-3-1.34-3-3-3z" fill="#dedee8" /></svg>
<svg style="left:1680.0px;top:958.8px" width="26" height="26" viewBox="0 0 24 24"><path d="M10 4H4c-1.1 0-1.99.9-1.99 2L2 18c0 1.1.9 2 2 2h16c1.1 0 2-.9 2-2V8c0-1.1-.9-2-2-2h-8l-2-2z" fill="#d3d3de" /></svg>
<svg style="left:1663.3px;top:965.8px" width="9" height="15" viewBox="0 0 9 15"><path d="M1.200 1.200L7.400 7.500L1.200 13.800" fill="none" stroke="#8c909c" stroke-width="2.400"/></svg>
<div class="t" style="left:1712px;top:964.0999999999999px;font-size:18px;color:#dedee8;">BC</div>
<svg style="left:1853.8px;top:962.9px" width="22" height="21" viewBox="0 0 22 21"><rect x="0" y="8.300" width="17.500" height="11.600" rx="1.800" fill="#80848f"/><path d="M12.700 8.500V5.600a4.250 4.250 0 0 1 8.500 0V7.300" fill="none" stroke="#80848f" stroke-width="2.200"/></svg>
<svg style="left:1878.2px;top:959.6999999999999px" width="24" height="24" viewBox="0 0 24 24"><path d="M12 7c2.76 0 5 2.24 5 5 0 .65-.13 1.26-.36 1.83l2.92 2.92c1.51-1.26 2.7-2.89 3.43-4.75-1.73-4.39-6-7.5-11-7.5-1.4 0-2.74.25-3.98.7l2.16 2.16C10.74 7.13 11.35 7 12 7zM2 4.27l2.28 2.28.46.46C3.08 8.3 1.78 10.02 1 12c1.73 4.39 6 7.5 11 7.5 1.55 0 3.03-.3 4.38-.84l.42.42L19.73 22 21 20.73 3.27 3 2 4.27zM7.53 9.8l1.55 1.55c-.05.21-.08.43-.08.65 0 1.66 1.34 3 3 3 .22 0 .44-.03.65-.08l1.55 1.55c-.67.33-1.41.53-2.2.53-2.76 0-5-2.24-5-5 0-.79.2-1.53.53-2.2zm4.31-.78l3.15 3.15.02-.16c0-1.66-1.34-3-3-3l-.17.01z" fill="#7d8290" /></svg>
<svg style="left:1680.0px;top:993.8px" width="26" height="26" viewBox="0 0 24 24"><path d="M10 4H4c-1.1 0-1.99.9-1.99 2L2 18c0 1.1.9 2 2 2h16c1.1 0 2-.9 2-2V8c0-1.1-.9-2-2-2h-8l-2-2z" fill="#d3d3de" /></svg>
<svg style="left:1660.2px;top:1004.3px" width="15" height="9" viewBox="0 0 15 9"><path d="M1.200 1.200L7.500 7.400L13.800 1.200" fill="none" stroke="#8c909c" stroke-width="2.400"/></svg>
<div class="t" style="left:1712px;top:999.0999999999999px;font-size:18px;color:#dedee8;">BB</div>
<svg style="left:1853.8px;top:997.9px" width="22" height="21" viewBox="0 0 22 21"><rect x="0" y="8.300" width="17.500" height="11.600" rx="1.800" fill="#80848f"/><path d="M12.700 8.500V5.600a4.250 4.250 0 0 1 8.500 0V7.300" fill="none" stroke="#80848f" stroke-width="2.200"/></svg>
<svg style="left:1878.2px;top:994.6999999999999px" width="24" height="24" viewBox="0 0 24 24"><path d="M12 4.5C7 4.5 2.73 7.61 1 12c1.73 4.39 6 7.5 11 7.5s9.27-3.11 11-7.5c-1.73-4.39-6-7.5-11-7.5zM12 17c-2.76 0-5-2.24-5-5s2.24-5 5-5 5 2.24 5 5-2.24 5-5 5zm0-8c-1.66 0-3 1.34-3 3s1.34 3 3 3 3-1.34 3-3-1.34-3-3-3z" fill="#dedee8" /></svg>
<div class="a" style="left:1615px;top:1026px;width:305px;height:15.500px;overflow:hidden">
<svg style="left:86.6px;top:7.5px" width="22" height="20.6" viewBox="0 0 22 20.600"><path d="M11 0.800L20.300 5.200V15.300L11 19.800L1.700 15.300V5.200Z" fill="#d3d3de" stroke="#d3d3de" stroke-width="1.400" stroke-linejoin="round"/><path d="M11 3.300L16.900 6L11 8.700L5.100 6Z M13.300 11.400L18 9.200V14.300L13.300 16.600Z" fill="#181b20"/></svg>
<div class="t" style="left:116.0px;top:8.3px;font-size:18px;color:#dedee8;">cube</div>
<svg style="left:238.8px;top:7.1px" width="22" height="21" viewBox="0 0 22 21"><rect x="0" y="8.300" width="17.500" height="11.600" rx="1.800" fill="#80848f"/><path d="M12.700 8.500V5.600a4.250 4.250 0 0 1 8.500 0V7.300" fill="none" stroke="#80848f" stroke-width="2.200"/></svg>
<svg style="left:263.2px;top:3.9px" width="24" height="24" viewBox="0 0 24 24"><path d="M12 4.5C7 4.5 2.73 7.61 1 12c1.73 4.39 6 7.5 11 7.5s9.27-3.11 11-7.5c-1.73-4.39-6-7.5-11-7.5zM12 17c-2.76 0-5-2.24-5-5s2.24-5 5-5 5 2.24 5 5-2.24 5-5 5zm0-8c-1.66 0-3 1.34-3 3s1.34 3 3 3 3-1.34 3-3-1.34-3-3-3z" fill="#dedee8" /></svg>
</div>
<div class="a" style="left:1908.5px;top:718.5px;width:6.5px;height:67.5px;background:#2b303a;border-radius:3px"></div>
<svg style="left:1906px;top:651px" width="10" height="6" viewBox="0 0 10 6"><path d="M0 6H10L5 0Z" fill="#2b303a"/></svg>
<svg style="left:1906px;top:1030px" width="10" height="6" viewBox="0 0 10 6"><path d="M0 0H10L5 6Z" fill="#2b303a"/></svg>
<svg class="wmsvg" style="left:0;top:0;pointer-events:none;opacity:.6" width="1920" height="1043" viewBox="0 0 1920 1043"><g font-family="DejaVu Sans, Liberation Sans, sans-serif" font-weight="200" font-size="20" fill="#f6f6f6"><text transform="translate(-177.3 1162.7) rotate(-45)">bd.dzwmhyk.top/Dzwmhyk</text><text transform="translate(-133.4 1206.4) rotate(-45)">bd.dzwmhyk.top/Dzwmhyk</text><text transform="translate(-169.5 630.0) rotate(-45)">bd.dzwmhyk.top/Dzwmhyk</text><text transform="translate(-125.7 673.7) rotate(-45)">bd.dzwmhyk.top/Dzwmhyk</text><text transform="translate(-81.8 717.5) rotate(-45)">bd.dzwmhyk.top/Dzwmhyk</text><text transform="translate(-38.0 761.2) rotate(-45)">bd.dzwmhyk.top/Dzwmhyk</text><text transform="translate(5.9 804.9) rotate(-45)">bd.dzwmhyk.top/Dzwmhyk</text><text transform="translate(49.7 848.6) rotate(-45)">bd.dzwmhyk.top/Dzwmhyk</text><text transform="translate(93.5 892.4) rotate(-45)">bd.dzwmhyk.top/Dzwmhyk</text><text transform="translate(137.4 936.1) rotate(-45)">bd.dzwmhyk.top/Dzwmhyk</text><text transform="translate(181.2 979.8) rotate(-45)">bd.dzwmhyk.top/Dzwmhyk</text><text transform="translate(225.1 1023.6) rotate(-45)">bd.dzwmhyk.top/Dzwmhyk</text><text transform="translate(268.9 1067.3) rotate(-45)">bd.dzwmhyk.top/Dzwmhyk</text><text transform="translate(312.7 1111.0) rotate(-45)">bd.dzwmhyk.top/Dzwmhyk</text><text transform="translate(356.6 1154.8) rotate(-45)">bd.dzwmhyk.top/Dzwmhyk</text><text transform="translate(400.4 1198.5) rotate(-45)">bd.dzwmhyk.top/Dzwmhyk</text><text transform="translate(101.3 359.7) rotate(-45)">bd.dzwmhyk.top/Dzwmhyk</text><text transform="translate(145.1 403.4) rotate(-45)">bd.dzwmhyk.top/Dzwmhyk</text><text transform="translate(189.0 447.2) rotate(-45)">bd.dzwmhyk.top/Dzwmhyk</text><text transform="translate(232.8 490.9) rotate(-45)">bd.dzwmhyk.top/Dzwmhyk</text><text transform="translate(276.7 534.6) rotate(-45)">bd.dzwmhyk.top/Dzwmhyk</text><text transform="translate(320.5 578.4) rotate(-45)">bd.dzwmhyk.top/Dzwmhyk</text><text transform="translate(364.3 622.1) rotate(-45)">bd.dzwmhyk.top/Dzwmhyk</text><text transform="translate(408.2 665.8) rotate(-45)">bd.dzwmhyk.top/Dzwmhyk</text><text transform="translate(452.0 709.5) rotate(-45)">bd.dzwmhyk.top/Dzwmhyk</text><text transform="translate(495.9 753.3) rotate(-45)">bd.dzwmhyk.top/Dzwmhyk</text><text transform="translate(539.7 797.0) rotate(-45)">bd.dzwmhyk.top/Dzwmhyk</text><text transform="translate(583.5 840.7) rotate(-45)">bd.dzwmhyk.top/Dzwmhyk</text><text transform="translate(627.4 884.5) rotate(-45)">bd.dzwmhyk.top/Dzwmhyk</text><text transform="translate(671.2 928.2) rotate(-45)">bd.dzwmhyk.top/Dzwmhyk</text><text transform="translate(715.1 971.9) rotate(-45)">bd.dzwmhyk.top/Dzwmhyk</text><text transform="translate(758.9 1015.6) rotate(-45)">bd.dzwmhyk.top/Dzwmhyk</text><text transform="translate(802.7 1059.4) rotate(-45)">bd.dzwmhyk.top/Dzwmhyk</text><text transform="translate(846.6 1103.1) rotate(-45)">bd.dzwmhyk.top/Dzwmhyk</text><text transform="translate(890.4 1146.8) rotate(-45)">bd.dzwmhyk.top/Dzwmhyk</text><text transform="translate(934.3 1190.6) rotate(-45)">bd.dzwmhyk.top/Dzwmhyk</text><text transform="translate(978.1 1234.3) rotate(-45)">bd.dzwmhyk.top/Dzwmhyk</text><text transform="translate(372.1 89.4) rotate(-45)">bd.dzwmhyk.top/Dzwmhyk</text><text transform="translate(415.9 133.1) rotate(-45)">bd.dzwmhyk.top/Dzwmhyk</text><text transform="translate(459.8 176.9) rotate(-45)">bd.dzwmhyk.top/Dzwmhyk</text><text transform="translate(503.6 220.6) rotate(-45)">bd.dzwmhyk.top/Dzwmhyk</text><text transform="translate(547.5 264.3) rotate(-45)">bd.dzwmhyk.top/Dzwmhyk</text><text transform="translate(591.3 308.1) rotate(-45)">bd.dzwmhyk.top/Dzwmhyk</text><text transform="translate(635.1 351.8) rotate(-45)">bd.dzwmhyk.top/Dzwmhyk</text><text transform="translate(679.0 395.5) rotate(-45)">bd.dzwmhyk.top/Dzwmhyk</text><text transform="translate(722.8 439.2) rotate(-45)">bd.dzwmhyk.top/Dzwmhyk</text><text transform="translate(766.7 483.0) rotate(-45)">bd.dzwmhyk.top/Dzwmhyk</text><text transform="translate(810.5 526.7) rotate(-45)">bd.dzwmhyk.top/Dzwmhyk</text><text transform="translate(854.3 570.4) rotate(-45)">bd.dzwmhyk.top/Dzwmhyk</text><text transform="translate(898.2 614.2) rotate(-45)">bd.dzwmhyk.top/Dzwmhyk</text><text transform="translate(942.0 657.9) rotate(-45)">bd.dzwmhyk.top/Dzwmhyk</text><text transform="translate(985.9 701.6) rotate(-45)">bd.dzwmhyk.top/Dzwmhyk</text><text transform="translate(1029.7 745.4) rotate(-45)">bd.dzwmhyk.top/Dzwmhyk</text><text transform="translate(1073.5 789.1) rotate(-45)">bd.dzwmhyk.top/Dzwmhyk</text><text transform="translate(1117.4 832.8) rotate(-45)">bd.dzwmhyk.top/Dzwmhyk</text><text transform="translate(1161.2 876.5) rotate(-45)">bd.dzwmhyk.top/Dzwmhyk</text><text transform="translate(1205.1 920.3) rotate(-45)">bd.dzwmhyk.top/Dzwmhyk</text><text transform="translate(1248.9 964.0) rotate(-45)">bd.dzwmhyk.top/Dzwmhyk</text><text transform="translate(1292.7 1007.7) rotate(-45)">bd.dzwmhyk.top/Dzwmhyk</text><text transform="translate(1336.6 1051.5) rotate(-45)">bd.dzwmhyk.top/Dzwmhyk</text><text transform="translate(1380.4 1095.2) rotate(-45)">bd.dzwmhyk.top/Dzwmhyk</text><text transform="translate(1424.3 1138.9) rotate(-45)">bd.dzwmhyk.top/Dzwmhyk</text><text transform="translate(862.1 37.8) rotate(-45)">bd.dzwmhyk.top/Dzwmhyk</text><text transform="translate(905.9 81.5) rotate(-45)">bd.dzwmhyk.top/Dzwmhyk</text><text transform="translate(949.8 125.2) rotate(-45)">bd.dzwmhyk.top/Dzwmhyk</text><text transform="translate(993.6 168.9) rotate(-45)">bd.dzwmhyk.top/Dzwmhyk</text><text transform="translate(1037.5 212.7) rotate(-45)">bd.dzwmhyk.top/Dzwmhyk</text><text transform="translate(1081.3 256.4) rotate(-45)">bd.dzwmhyk.top/Dzwmhyk</text><text transform="translate(1125.1 300.1) rotate(-45)">bd.dzwmhyk.top/Dzwmhyk</text><text transform="translate(1169.0 343.9) rotate(-45)">bd.dzwmhyk.top/Dzwmhyk</text><text transform="translate(1212.8 387.6) rotate(-45)">bd.dzwmhyk.top/Dzwmhyk</text><text transform="translate(1256.7 431.3) rotate(-45)">bd.dzwmhyk.top/Dzwmhyk</text><text transform="translate(1300.5 475.0) rotate(-45)">bd.dzwmhyk.top/Dzwmhyk</text><text transform="translate(1344.3 518.8) rotate(-45)">bd.dzwmhyk.top/Dzwmhyk</text><text transform="translate(1388.2 562.5) rotate(-45)">bd.dzwmhyk.top/Dzwmhyk</text><text transform="translate(1432.0 606.2) rotate(-45)">bd.dzwmhyk.top/Dzwmhyk</text><text transform="translate(1475.9 650.0) rotate(-45)">bd.dzwmhyk.top/Dzwmhyk</text><text transform="translate(1519.7 693.7) rotate(-45)">bd.dzwmhyk.top/Dzwmhyk</text><text transform="translate(1563.5 737.4) rotate(-45)">bd.dzwmhyk.top/Dzwmhyk</text><text transform="translate(1607.4 781.2) rotate(-45)">bd.dzwmhyk.top/Dzwmhyk</text><text transform="translate(1651.2 824.9) rotate(-45)">bd.dzwmhyk.top/Dzwmhyk</text><text transform="translate(1695.1 868.6) rotate(-45)">bd.dzwmhyk.top/Dzwmhyk</text><text transform="translate(1395.9 29.8) rotate(-45)">bd.dzwmhyk.top/Dzwmhyk</text><text transform="translate(1439.8 73.6) rotate(-45)">bd.dzwmhyk.top/Dzwmhyk</text><text transform="translate(1483.6 117.3) rotate(-45)">bd.dzwmhyk.top/Dzwmhyk</text><text transform="translate(1527.5 161.0) rotate(-45)">bd.dzwmhyk.top/Dzwmhyk</text><text transform="translate(1571.3 204.7) rotate(-45)">bd.dzwmhyk.top/Dzwmhyk</text><text transform="translate(1615.1 248.5) rotate(-45)">bd.dzwmhyk.top/Dzwmhyk</text><text transform="translate(1659.0 292.2) rotate(-45)">bd.dzwmhyk.top/Dzwmhyk</text><text transform="translate(1702.8 335.9) rotate(-45)">bd.dzwmhyk.top/Dzwmhyk</text><text transform="translate(1746.7 379.7) rotate(-45)">bd.dzwmhyk.top/Dzwmhyk</text><text transform="translate(1790.5 423.4) rotate(-45)">bd.dzwmhyk.top/Dzwmhyk</text><text transform="translate(1834.3 467.1) rotate(-45)">bd.dzwmhyk.top/Dzwmhyk</text><text transform="translate(1878.2 510.9) rotate(-45)">bd.dzwmhyk.top/Dzwmhyk</text><text transform="translate(1922.0 554.6) rotate(-45)">bd.dzwmhyk.top/Dzwmhyk</text></g></svg></body></html>
